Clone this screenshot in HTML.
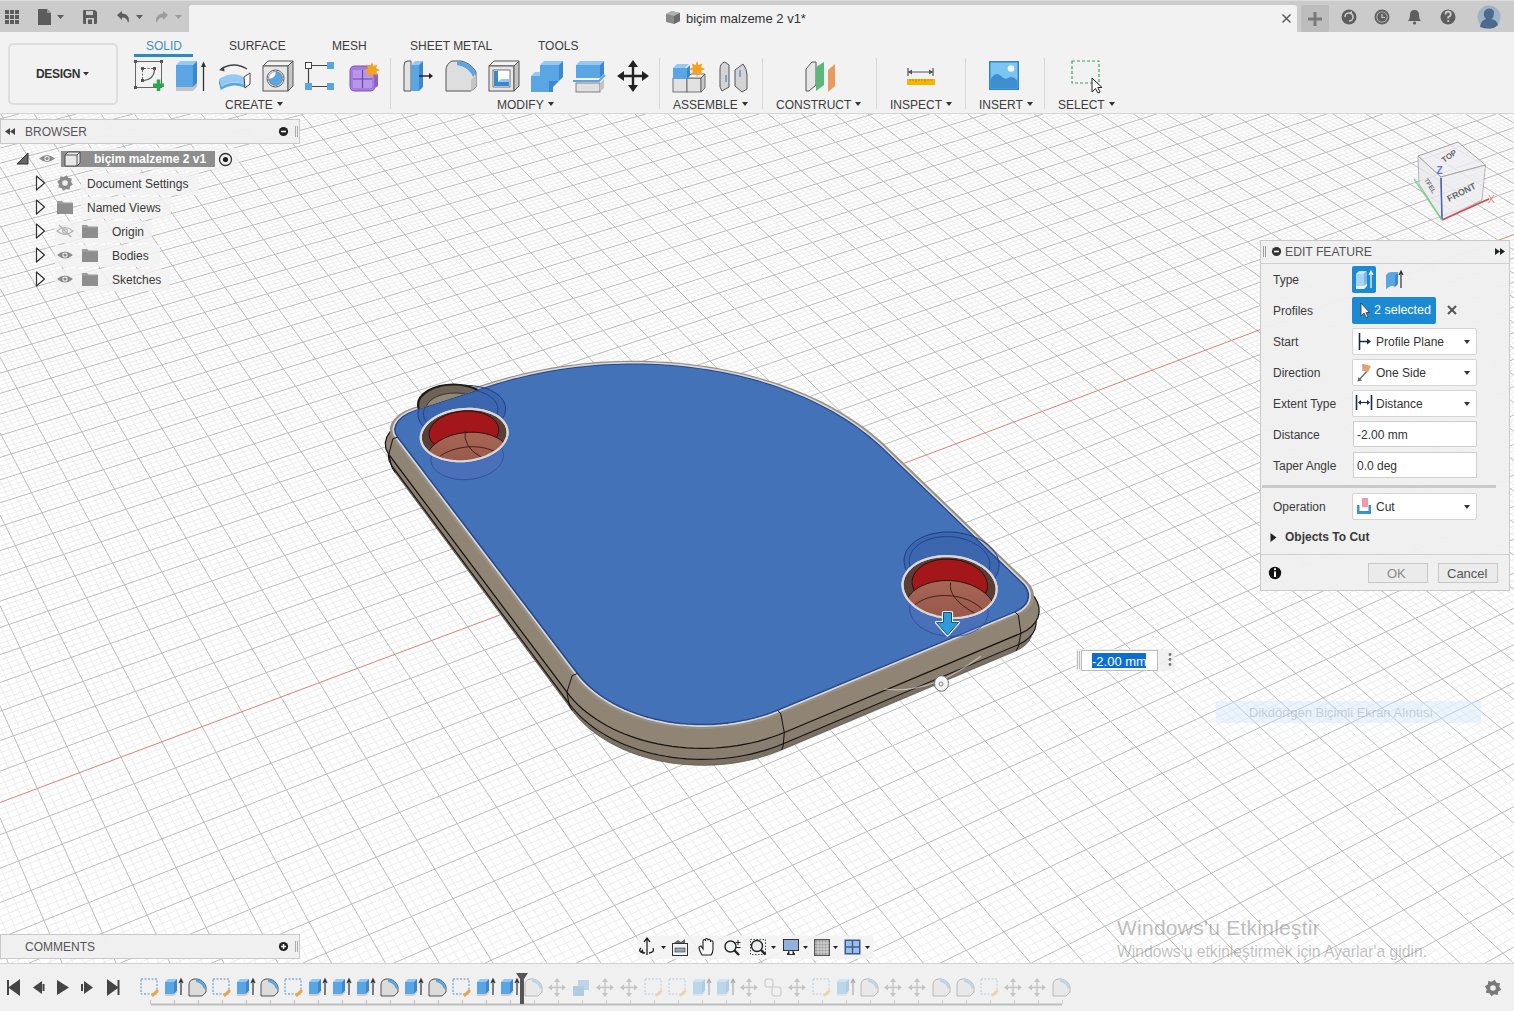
<!DOCTYPE html>
<html><head><meta charset="utf-8">
<style>
*{margin:0;padding:0;box-sizing:border-box}
html,body{width:1514px;height:1011px;overflow:hidden;background:#fff;font-family:"Liberation Sans",sans-serif;color:#3c3c3c}
.a{position:absolute}
.t{position:absolute;white-space:nowrap;line-height:1}
#topbar{left:0;top:0;width:1514px;height:32px;background:#cbcbcb;border-top:1px solid #dcdcdc}
#tab{left:189px;top:5px;width:1108px;height:28px;background:#f2f2f2;border-radius:3px 3px 0 0}
#toolbar{left:0;top:32px;width:1514px;height:82px;background:#f2f2f2;border-bottom:1px solid #d6d6d6}
.tabl{font-size:12px;color:#3c3c3c;top:40px}
.grp{font-size:12px;color:#3c3c3c;top:99px}
.tri{display:inline-block;width:0;height:0;border-left:3px solid transparent;border-right:3px solid transparent;border-top:4px solid #333;vertical-align:middle;margin-left:4px;position:relative;top:-2px}
.sep{position:absolute;top:58px;width:1px;height:51px;background:#d8d8d8}
.panel{background:rgba(240,240,240,0.97);border:1px solid #c9c9c9}
.row{position:absolute;height:22px;background:rgba(242,242,242,0.85)}
.lbl{font-size:12px;color:#3a3a3a}
.dd{position:absolute;left:1352px;width:125px;height:27px;background:#fff;border:1px solid #d4d4d4;border-radius:2px}
.ddt{position:absolute;left:23px;top:7px;font-size:12px;color:#333;white-space:nowrap;line-height:1}
.arr{position:absolute;right:6px;top:11px;width:0;height:0;border-left:3.5px solid transparent;border-right:3.5px solid transparent;border-top:4px solid #333}
.inp{position:absolute;left:1353px;width:124px;height:26px;background:#fff;border:1px solid #cfcfcf}
.inpt{position:absolute;left:3px;top:7px;font-size:12px;color:#333;line-height:1;white-space:nowrap}
#timeline{left:0;top:963px;width:1514px;height:48px;background:#f0f0f0;border-top:1px solid #d2d2d2}
</style></head><body>
<svg id="grid" width="1514" height="1011" viewBox="0 0 1514 1011" style="position:absolute;left:0;top:0"><path d="M19.0 963.0L0.0 916.6M29.7 963.0L0.0 891.0M40.5 963.0L0.0 866.0M51.3 963.0L0.0 841.6M72.9 963.0L0.0 794.4M83.7 963.0L0.0 771.5M94.4 963.0L0.0 749.2M105.2 963.0L0.0 727.4M126.8 963.0L0.0 685.1M137.6 963.0L0.0 664.6M148.3 963.0L0.0 644.5M159.1 963.0L0.0 624.8M180.7 963.0L0.0 586.7M191.5 963.0L0.0 568.2M202.2 963.0L0.0 550.1M213.0 963.0L0.0 532.3M234.6 963.0L0.0 497.7M245.3 963.0L0.0 481.0M256.1 963.0L0.0 464.5M266.9 963.0L0.0 448.3M288.4 963.0L0.0 416.9M299.2 963.0L0.0 401.6M310.0 963.0L0.0 386.6M320.8 963.0L0.0 371.8M342.3 963.0L0.0 343.1M353.1 963.0L0.0 329.1M363.8 963.0L0.0 315.3M374.6 963.0L0.0 301.8M396.1 963.0L0.0 275.4M406.9 963.0L0.0 262.6M417.7 963.0L0.0 249.9M428.4 963.0L0.0 237.5M450.0 963.0L0.0 213.2M460.7 963.0L0.0 201.4M471.5 963.0L0.0 189.7M482.3 963.0L0.0 178.2M503.8 963.0L0.0 155.8M514.6 963.0L0.0 144.8M525.3 963.0L0.0 134.0M536.1 963.0L0.0 123.4M557.6 963.0L7.4 114.0M568.4 963.0L14.1 114.0M579.1 963.0L20.8 114.0M589.9 963.0L27.4 114.0M611.4 963.0L40.8 114.0M622.2 963.0L47.5 114.0M632.9 963.0L54.2 114.0M643.7 963.0L60.9 114.0M665.2 963.0L74.3 114.0M676.0 963.0L80.9 114.0M686.7 963.0L87.6 114.0M697.5 963.0L94.3 114.0M719.0 963.0L107.7 114.0M729.7 963.0L114.4 114.0M740.5 963.0L121.1 114.0M751.2 963.0L127.7 114.0M772.7 963.0L141.1 114.0M783.5 963.0L147.8 114.0M794.2 963.0L154.5 114.0M805.0 963.0L161.2 114.0M826.5 963.0L174.5 114.0M837.2 963.0L181.2 114.0M848.0 963.0L187.9 114.0M858.7 963.0L194.6 114.0M880.2 963.0L207.9 114.0M891.0 963.0L214.6 114.0M901.7 963.0L221.3 114.0M912.5 963.0L228.0 114.0M934.0 963.0L241.3 114.0M944.7 963.0L248.0 114.0M955.4 963.0L254.7 114.0M966.2 963.0L261.4 114.0M987.7 963.0L274.7 114.0M998.4 963.0L281.4 114.0M1009.2 963.0L288.1 114.0M1019.9 963.0L294.8 114.0M1041.4 963.0L308.1 114.0M1052.1 963.0L314.8 114.0M1062.8 963.0L321.5 114.0M1073.6 963.0L328.2 114.0M1095.1 963.0L341.5 114.0M1105.8 963.0L348.2 114.0M1116.5 963.0L354.9 114.0M1127.3 963.0L361.5 114.0M1148.7 963.0L374.9 114.0M1159.5 963.0L381.6 114.0M1170.2 963.0L388.2 114.0M1180.9 963.0L394.9 114.0M1202.4 963.0L408.2 114.0M1213.1 963.0L414.9 114.0M1223.9 963.0L421.6 114.0M1234.6 963.0L428.3 114.0M1256.1 963.0L441.6 114.0M1266.8 963.0L448.3 114.0M1277.5 963.0L454.9 114.0M1288.2 963.0L461.6 114.0M1309.7 963.0L474.9 114.0M1320.4 963.0L481.6 114.0M1331.2 963.0L488.3 114.0M1341.9 963.0L495.0 114.0M1363.3 963.0L508.3 114.0M1374.1 963.0L515.0 114.0M1384.8 963.0L521.6 114.0M1395.5 963.0L528.3 114.0M1417.0 963.0L541.6 114.0M1427.7 963.0L548.3 114.0M1438.4 963.0L555.0 114.0M1449.1 963.0L561.6 114.0M1470.6 963.0L575.0 114.0M1481.3 963.0L581.6 114.0M1492.0 963.0L588.3 114.0M1502.7 963.0L594.9 114.0M1514.0 953.6L608.3 114.0M1514.0 943.7L614.9 114.0M1514.0 934.0L621.6 114.0M1514.0 924.3L628.3 114.0M1514.0 905.2L641.6 114.0M1514.0 895.8L648.2 114.0M1514.0 886.4L654.9 114.0M1514.0 877.2L661.6 114.0M1514.0 858.9L674.9 114.0M1514.0 849.8L681.6 114.0M1514.0 840.9L688.2 114.0M1514.0 832.0L694.9 114.0M1514.0 814.5L708.2 114.0M1514.0 805.8L714.8 114.0M1514.0 797.2L721.5 114.0M1514.0 788.7L728.2 114.0M1514.0 771.9L741.5 114.0M1514.0 763.6L748.1 114.0M1514.0 755.3L754.8 114.0M1514.0 747.2L761.4 114.0M1514.0 731.0L774.8 114.0M1514.0 723.0L781.4 114.0M1514.0 715.1L788.1 114.0M1514.0 707.3L794.7 114.0M1514.0 691.7L808.0 114.0M1514.0 684.1L814.7 114.0M1514.0 676.5L821.3 114.0M1514.0 668.9L828.0 114.0M1514.0 654.0L841.3 114.0M1514.0 646.6L848.0 114.0M1514.0 639.3L854.6 114.0M1514.0 632.0L861.3 114.0M1514.0 617.6L874.6 114.0M1514.0 610.5L881.2 114.0M1514.0 603.5L887.9 114.0M1514.0 596.5L894.5 114.0M1514.0 582.7L907.8 114.0M1514.0 575.8L914.5 114.0M1514.0 569.0L921.1 114.0M1514.0 562.3L927.8 114.0M1514.0 548.9L941.1 114.0M1514.0 542.3L947.7 114.0M1514.0 535.8L954.4 114.0M1514.0 529.3L961.0 114.0M1514.0 516.4L974.3 114.0M1514.0 510.1L980.9 114.0M1514.0 503.7L987.6 114.0M1514.0 497.5L994.2 114.0M1514.0 485.1L1007.5 114.0M1514.0 478.9L1014.2 114.0M1514.0 472.8L1020.8 114.0M1514.0 466.8L1027.5 114.0M1514.0 454.8L1040.8 114.0M1514.0 448.8L1047.4 114.0M1514.0 443.0L1054.0 114.0M1514.0 437.1L1060.7 114.0M1514.0 425.5L1074.0 114.0M1514.0 419.8L1080.6 114.0M1514.0 414.1L1087.3 114.0M1514.0 408.4L1093.9 114.0M1514.0 397.2L1107.2 114.0M1514.0 391.7L1113.8 114.0M1514.0 386.2L1120.5 114.0M1514.0 380.7L1127.1 114.0M1514.0 369.9L1140.4 114.0M1514.0 364.5L1147.0 114.0M1514.0 359.2L1153.7 114.0M1514.0 353.9L1160.3 114.0M1514.0 343.4L1173.6 114.0M1514.0 338.2L1180.2 114.0M1514.0 333.1L1186.8 114.0M1514.0 327.9L1193.5 114.0M1514.0 317.8L1206.8 114.0M1514.0 312.8L1213.4 114.0M1514.0 307.8L1220.0 114.0M1514.0 302.8L1226.7 114.0M1514.0 293.0L1239.9 114.0M1514.0 288.1L1246.6 114.0M1514.0 283.2L1253.2 114.0M1514.0 278.4L1259.8 114.0M1514.0 268.9L1273.1 114.0M1514.0 264.2L1279.7 114.0M1514.0 259.5L1286.4 114.0M1514.0 254.8L1293.0 114.0M1514.0 245.6L1306.3 114.0M1514.0 241.0L1312.9 114.0M1514.0 236.4L1319.5 114.0M1514.0 231.9L1326.2 114.0M1514.0 222.9L1339.4 114.0M1514.0 218.5L1346.1 114.0M1514.0 214.1L1352.7 114.0M1514.0 209.7L1359.3 114.0M1514.0 200.9L1372.6 114.0M1514.0 196.6L1379.2 114.0M1514.0 192.3L1385.8 114.0M1514.0 188.1L1392.5 114.0M1514.0 179.6L1405.7 114.0M1514.0 175.4L1412.3 114.0M1514.0 171.3L1419.0 114.0M1514.0 167.1L1425.6 114.0M1514.0 158.9L1438.8 114.0M1514.0 154.8L1445.5 114.0M1514.0 150.8L1452.1 114.0M1514.0 146.7L1458.7 114.0M1514.0 138.8L1472.0 114.0M1514.0 134.8L1478.6 114.0M1514.0 130.9L1485.2 114.0M1514.0 126.9L1491.8 114.0M1514.0 119.2L1505.1 114.0M1514.0 115.3L1511.7 114.0M1503.5 963.0L1514.0 957.1M1467.2 963.0L1514.0 937.1M1449.0 963.0L1514.0 927.2M1430.9 963.0L1514.0 917.5M1412.7 963.0L1514.0 907.8M1376.4 963.0L1514.0 888.6M1358.2 963.0L1514.0 879.2M1340.1 963.0L1514.0 869.8M1321.9 963.0L1514.0 860.6M1285.6 963.0L1514.0 842.3M1267.4 963.0L1514.0 833.2M1249.3 963.0L1514.0 824.3M1231.1 963.0L1514.0 815.4M1194.8 963.0L1514.0 797.8M1176.6 963.0L1514.0 789.2M1158.4 963.0L1514.0 780.6M1140.3 963.0L1514.0 772.0M1103.9 963.0L1514.0 755.2M1085.7 963.0L1514.0 746.9M1067.6 963.0L1514.0 738.7M1049.4 963.0L1514.0 730.5M1013.0 963.0L1514.0 714.3M994.8 963.0L1514.0 706.3M976.6 963.0L1514.0 698.4M958.5 963.0L1514.0 690.6M922.1 963.0L1514.0 675.1M903.9 963.0L1514.0 667.4M885.7 963.0L1514.0 659.8M867.5 963.0L1514.0 652.2M831.1 963.0L1514.0 637.3M812.9 963.0L1514.0 629.9M794.7 963.0L1514.0 622.6M776.5 963.0L1514.0 615.4M740.1 963.0L1514.0 601.0M721.9 963.0L1514.0 593.9M703.7 963.0L1514.0 586.9M685.5 963.0L1514.0 579.9M649.1 963.0L1514.0 566.1M630.9 963.0L1514.0 559.2M612.6 963.0L1514.0 552.4M594.4 963.0L1514.0 545.7M558.0 963.0L1514.0 532.4M539.8 963.0L1514.0 525.8M521.6 963.0L1514.0 519.3M503.3 963.0L1514.0 512.8M466.9 963.0L1514.0 499.9M448.7 963.0L1514.0 493.6M430.4 963.0L1514.0 487.3M412.2 963.0L1514.0 481.0M375.7 963.0L1514.0 468.6M357.5 963.0L1514.0 462.5M339.3 963.0L1514.0 456.4M321.0 963.0L1514.0 450.4M284.6 963.0L1514.0 438.4M266.3 963.0L1514.0 432.5M248.1 963.0L1514.0 426.6M229.8 963.0L1514.0 420.8M193.4 963.0L1514.0 409.2M175.1 963.0L1514.0 403.5M156.9 963.0L1514.0 397.8M138.6 963.0L1514.0 392.2M102.1 963.0L1514.0 381.0M83.9 963.0L1514.0 375.5M65.6 963.0L1514.0 370.0M47.3 963.0L1514.0 364.5M10.8 963.0L1514.0 353.7M0.0 960.0L1514.0 348.4M0.0 952.7L1514.0 343.1M0.0 945.4L1514.0 337.8M0.0 930.9L1514.0 327.4M0.0 923.8L1514.0 322.2M0.0 916.7L1514.0 317.0M0.0 909.6L1514.0 311.9M0.0 895.6L1514.0 301.8M0.0 888.7L1514.0 296.8M0.0 881.8L1514.0 291.8M0.0 875.0L1514.0 286.9M0.0 861.4L1514.0 277.1M0.0 854.7L1514.0 272.2M0.0 848.0L1514.0 267.4M0.0 841.4L1514.0 262.6M0.0 828.3L1514.0 253.1M0.0 821.8L1514.0 248.4M0.0 815.3L1514.0 243.7M0.0 808.9L1514.0 239.1M0.0 796.1L1514.0 229.9M0.0 789.8L1514.0 225.3M0.0 783.6L1514.0 220.8M0.0 777.3L1514.0 216.2M0.0 765.0L1514.0 207.3M0.0 758.9L1514.0 202.9M0.0 752.8L1514.0 198.5M0.0 746.7L1514.0 194.1M0.0 734.7L1514.0 185.4M0.0 728.8L1514.0 181.1M0.0 722.9L1514.0 176.9M0.0 717.0L1514.0 172.6M0.0 705.4L1514.0 164.2M0.0 699.6L1514.0 160.0M0.0 693.9L1514.0 155.9M0.0 688.2L1514.0 151.8M0.0 676.9L1514.0 143.6M0.0 671.3L1514.0 139.5M0.0 665.7L1514.0 135.5M0.0 660.2L1514.0 131.5M0.0 649.2L1514.0 123.5M0.0 643.7L1514.0 119.6M0.0 638.3L1514.0 115.7M0.0 632.9L1507.5 114.0M0.0 622.3L1484.9 114.0M-0.0 617.0L1473.6 114.0M0.0 611.7L1462.3 114.0M-0.0 606.5L1451.0 114.0M0.0 596.1L1428.4 114.0M0.0 590.9L1417.1 114.0M0.0 585.8L1405.8 114.0M0.0 580.7L1394.5 114.0M-0.0 570.6L1371.8 114.0M0.0 565.6L1360.5 114.0M0.0 560.6L1349.2 114.0M0.0 555.6L1337.9 114.0M0.0 545.8L1315.2 114.0M0.0 540.9L1303.9 114.0M0.0 536.1L1292.6 114.0M0.0 531.2L1281.3 114.0M0.0 521.7L1258.6 114.0M0.0 516.9L1247.3 114.0M0.0 512.2L1236.0 114.0M0.0 507.5L1224.7 114.0M0.0 498.2L1202.0 114.0M0.0 493.5L1190.7 114.0M0.0 488.9L1179.3 114.0M0.0 484.4L1168.0 114.0M0.0 475.3L1145.3 114.0M0.0 470.8L1134.0 114.0M0.0 466.3L1122.7 114.0M0.0 461.8L1111.3 114.0M0.0 453.0L1088.7 114.0M0.0 448.6L1077.3 114.0M0.0 444.2L1066.0 114.0M0.0 439.8L1054.7 114.0M0.0 431.2L1032.0 114.0M0.0 426.9L1020.6 114.0M0.0 422.7L1009.3 114.0M0.0 418.4L998.0 114.0M0.0 410.0L975.3 114.0M0.0 405.8L963.9 114.0M0.0 401.7L952.6 114.0M0.0 397.5L941.2 114.0M0.0 389.3L918.5 114.0M0.0 385.2L907.2 114.0M0.0 381.2L895.8 114.0M0.0 377.1L884.5 114.0M0.0 369.1L861.8 114.0M0.0 365.1L850.4 114.0M0.0 361.2L839.1 114.0M0.0 357.2L827.7 114.0M0.0 349.4L805.0 114.0M0.0 345.5L793.6 114.0M0.0 341.7L782.3 114.0M0.0 337.8L770.9 114.0M0.0 330.2L748.2 114.0M0.0 326.4L736.8 114.0M0.0 322.6L725.5 114.0M0.0 318.8L714.1 114.0M0.0 311.4L691.4 114.0M0.0 307.7L680.0 114.0M0.0 304.0L668.6 114.0M0.0 300.3L657.3 114.0M0.0 293.0L634.5 114.0M0.0 289.4L623.1 114.0M0.0 285.8L611.8 114.0M0.0 282.2L600.4 114.0M0.0 275.1L577.6 114.0M0.0 271.5L566.3 114.0M0.0 268.0L554.9 114.0M0.0 264.5L543.5 114.0M0.0 257.5L520.8 114.0M0.0 254.1L509.4 114.0M0.0 250.6L498.0 114.0M0.0 247.2L486.6 114.0M0.0 240.4L463.8 114.0M0.0 237.0L452.5 114.0M0.0 233.7L441.1 114.0M-0.0 230.3L429.7 114.0M0.0 223.6L406.9 114.0M0.0 220.3L395.5 114.0M0.0 217.0L384.1 114.0M0.0 213.8L372.7 114.0M0.0 207.2L349.9 114.0M-0.0 204.0L338.6 114.0M0.0 200.8L327.2 114.0M0.0 197.6L315.8 114.0M-0.0 191.2L293.0 114.0M0.0 188.0L281.6 114.0M-0.0 184.9L270.2 114.0M0.0 181.7L258.8 114.0M0.0 175.5L236.0 114.0M0.0 172.4L224.6 114.0M0.0 169.3L213.2 114.0M0.0 166.3L201.8 114.0M0.0 160.1L179.0 114.0M0.0 157.1L167.5 114.0M0.0 154.1L156.1 114.0M0.0 151.1L144.7 114.0M0.0 145.1L121.9 114.0M-0.0 142.1L110.5 114.0M-0.0 139.2L99.1 114.0M0.0 136.2L87.7 114.0M-0.0 130.4L64.8 114.0M0.0 127.5L53.4 114.0M0.0 124.6L42.0 114.0M0.0 121.7L30.6 114.0M-0.0 115.9L7.8 114.0" stroke="#ededed" stroke-width="1" fill="none"/><path d="M8.2 963.0L0.0 942.7M62.1 963.0L0.0 817.7M116.0 963.0L0.0 706.0M169.9 963.0L0.0 605.6M223.8 963.0L0.0 514.9M277.7 963.0L0.0 432.5M331.5 963.0L0.0 357.3M385.4 963.0L0.0 288.5M439.2 963.0L0.0 225.3M493.0 963.0L0.0 166.9M546.9 963.0L0.7 114.0M600.7 963.0L34.1 114.0M654.4 963.0L67.6 114.0M708.2 963.0L101.0 114.0M762.0 963.0L134.4 114.0M815.7 963.0L167.8 114.0M869.5 963.0L201.3 114.0M923.2 963.0L234.7 114.0M976.9 963.0L268.1 114.0M1030.6 963.0L301.4 114.0M1084.3 963.0L334.8 114.0M1138.0 963.0L368.2 114.0M1191.7 963.0L401.6 114.0M1245.3 963.0L434.9 114.0M1299.0 963.0L468.3 114.0M1352.6 963.0L501.6 114.0M1406.2 963.0L535.0 114.0M1459.8 963.0L568.3 114.0M1513.4 963.0L601.6 114.0M1514.0 914.7L634.9 114.0M1514.0 868.0L668.2 114.0M1514.0 823.2L701.5 114.0M1514.0 780.3L734.8 114.0M1514.0 739.1L768.1 114.0M1514.0 699.5L801.4 114.0M1514.0 661.4L834.6 114.0M1514.0 624.8L867.9 114.0M1514.0 589.5L901.2 114.0M1514.0 555.6L934.4 114.0M1514.0 522.8L967.7 114.0M1514.0 491.2L1000.9 114.0M1514.0 460.7L1034.1 114.0M1514.0 431.3L1067.3 114.0M1514.0 402.8L1100.5 114.0M1514.0 375.3L1133.7 114.0M1514.0 348.6L1166.9 114.0M1514.0 322.8L1200.1 114.0M1514.0 297.9L1233.3 114.0M1514.0 273.6L1266.5 114.0M1514.0 250.2L1299.6 114.0M1514.0 227.4L1332.8 114.0M1514.0 205.3L1365.9 114.0M1514.0 183.8L1399.1 114.0M1514.0 163.0L1432.2 114.0M1514.0 142.7L1465.3 114.0M1514.0 123.0L1498.5 114.0M1485.3 963.0L1514.0 947.1M1394.6 963.0L1514.0 898.2M1303.8 963.0L1514.0 851.4M1212.9 963.0L1514.0 806.6M1122.1 963.0L1514.0 763.6M1031.2 963.0L1514.0 722.4M940.3 963.0L1514.0 682.8M849.3 963.0L1514.0 644.7M758.3 963.0L1514.0 608.2M667.3 963.0L1514.0 572.9M576.2 963.0L1514.0 539.0M485.1 963.0L1514.0 506.3M394.0 963.0L1514.0 474.8M302.8 963.0L1514.0 444.4M211.6 963.0L1514.0 415.0M120.4 963.0L1514.0 386.6M29.1 963.0L1514.0 359.1M0.0 938.1L1514.0 332.6M0.0 902.6L1514.0 306.9M0.0 868.2L1514.0 282.0M0.0 834.8L1514.0 257.8M0.0 771.1L1514.0 211.8M0.0 740.7L1514.0 189.8M-0.0 711.2L1514.0 168.4M0.0 682.5L1514.0 147.6M-0.0 654.7L1514.0 127.5M0.0 627.6L1496.2 114.0M0.0 601.2L1439.7 114.0M0.0 575.6L1383.1 114.0M0.0 550.7L1326.6 114.0M0.0 526.4L1270.0 114.0M0.0 502.8L1213.3 114.0M0.0 479.8L1156.7 114.0M0.0 457.4L1100.0 114.0M0.0 435.5L1043.3 114.0M0.0 414.2L986.6 114.0M0.0 393.4L929.9 114.0M0.0 373.1L873.1 114.0M0.0 353.3L816.3 114.0M0.0 334.0L759.5 114.0M0.0 315.1L702.7 114.0M0.0 296.7L645.9 114.0M0.0 278.6L589.0 114.0M0.0 261.0L532.1 114.0M0.0 243.8L475.2 114.0M0.0 227.0L418.3 114.0M0.0 210.5L361.3 114.0M0.0 194.4L304.4 114.0M0.0 178.6L247.4 114.0M0.0 163.2L190.4 114.0M0.0 148.1L133.3 114.0M0.0 133.3L76.3 114.0M0.0 118.8L19.2 114.0" stroke="#bcbcbc" stroke-width="1" fill="none"/><path d="M0.0 802.5L1514.0 234.4" stroke="#e47c7c" stroke-width="1" fill="none"/></svg>
<svg id="model" width="1514" height="1011" viewBox="0 0 1514 1011" style="position:absolute;left:0;top:0"><defs><linearGradient id="wallg" x1="0" y1="0" x2="0" y2="1"><stop offset="0" stop-color="#a86656"/><stop offset="1" stop-color="#8c5043"/></linearGradient><clipPath id="h1c"><path d="M503.4 421.5 L501.7 419.6 L499.7 417.9 L497.4 416.2 L494.8 414.7 L492.0 413.4 L489.1 412.2 L485.9 411.2 L482.6 410.3 L479.2 409.7 L475.6 409.2 L472.0 408.9 L468.3 408.9 L464.5 409.0 L460.8 409.3 L457.1 409.8 L453.4 410.4 L449.9 411.3 L446.4 412.3 L443.1 413.5 L439.9 414.9 L436.9 416.4 L434.0 418.1 L431.5 419.8 L429.1 421.7 L427.0 423.7 L425.2 425.8 L423.7 428.0 L422.5 430.2 L421.6 432.5 L421.0 434.7 L420.8 437.0 L420.8 439.3 L421.3 441.5 L422.0 443.7 L423.1 445.9 L424.5 447.9 L426.2 449.8 L428.2 451.7 L430.4 453.4 L433.0 455.0 L435.8 456.4 L438.8 457.6 L442.0 458.7 L445.4 459.6 L448.9 460.3 L452.6 460.8 L456.3 461.1 L460.1 461.2 L464.0 461.1 L467.8 460.7 L471.6 460.2 L475.4 459.5 L479.1 458.6 L482.6 457.5 L486.0 456.2 L489.2 454.8 L492.3 453.2 L495.1 451.5 L497.6 449.6 L499.9 447.7 L502.0 445.6 L503.7 443.5 L505.1 441.3 L506.2 439.0 L507.0 436.8 L507.5 434.5 L507.6 432.2 L507.4 430.0 L506.9 427.8 L506.1 425.6 L504.9 423.5Z"/></clipPath><clipPath id="h2c"><path d="M988.0 571.1 L985.6 568.8 L982.8 566.7 L979.8 564.8 L976.6 563.0 L973.2 561.4 L969.6 560.0 L965.8 558.8 L962.0 557.8 L958.0 557.1 L954.0 556.5 L950.0 556.2 L946.0 556.1 L941.9 556.2 L938.0 556.6 L934.1 557.2 L930.4 558.0 L926.7 559.0 L923.3 560.2 L920.0 561.6 L917.0 563.2 L914.2 565.0 L911.7 567.0 L909.4 569.1 L907.4 571.3 L905.8 573.7 L904.4 576.2 L903.5 578.7 L902.8 581.4 L902.5 584.0 L902.6 586.7 L903.0 589.4 L903.8 592.1 L905.0 594.8 L906.4 597.4 L908.3 599.9 L910.4 602.3 L912.8 604.6 L915.6 606.8 L918.6 608.8 L921.8 610.7 L925.3 612.4 L929.0 613.9 L932.8 615.1 L936.7 616.2 L940.8 617.0 L944.9 617.6 L949.1 617.9 L953.3 618.0 L957.4 617.9 L961.5 617.5 L965.5 616.9 L969.3 616.1 L973.1 615.0 L976.6 613.7 L979.9 612.2 L982.9 610.5 L985.7 608.6 L988.3 606.5 L990.5 604.3 L992.4 602.0 L993.9 599.6 L995.2 597.0 L996.0 594.4 L996.5 591.8 L996.7 589.1 L996.5 586.4 L995.9 583.7 L995.0 581.0 L993.7 578.4 L992.2 575.9 L990.3 573.4Z"/></clipPath></defs><path d="M395.1 472.6 L392.5 467.6 L391.9 462.2 L393.3 456.8 L396.6 451.6 L401.6 446.8 L408.1 442.7 L415.8 439.5 L488.9 415.3 L495.9 413.0 L503.0 410.9 L510.1 408.8 L517.3 406.9 L524.5 405.1 L531.8 403.4 L539.1 401.9 L546.5 400.4 L553.9 399.1 L561.3 397.9 L568.8 396.8 L576.2 395.8 L583.7 394.9 L591.3 394.2 L598.8 393.5 L606.4 393.0 L613.9 392.6 L621.5 392.3 L629.0 392.2 L636.6 392.1 L644.1 392.2 L651.6 392.4 L659.2 392.7 L666.7 393.2 L674.1 393.7 L681.6 394.4 L689.0 395.2 L696.4 396.1 L703.7 397.1 L711.0 398.2 L718.2 399.5 L725.5 400.9 L732.6 402.4 L739.7 404.0 L746.7 405.7 L753.7 407.5 L760.6 409.5 L767.4 411.5 L774.2 413.7 L780.8 416.0 L787.4 418.4 L793.9 420.9 L800.3 423.5 L806.6 426.2 L812.8 429.1 L818.9 432.0 L824.9 435.1 L830.8 438.2 L836.6 441.5 L842.3 444.8 L847.8 448.3 L853.2 451.8 L858.5 455.5 L863.7 459.3 L868.7 463.1 L873.5 467.1 L878.3 471.1 L882.8 475.2 L887.3 479.4 L1024.9 614.2 L1028.5 618.4 L1031.0 622.8 L1032.3 627.4 L1032.4 632.0 L1031.3 636.5 L1029.1 640.8 L1025.7 644.7 L1021.3 648.0 L1016.1 650.8 L781.6 749.9 L775.5 752.3 L769.3 754.6 L762.9 756.6 L756.4 758.5 L749.8 760.1 L743.1 761.5 L736.2 762.7 L729.3 763.7 L722.4 764.4 L715.4 764.9 L708.4 765.2 L701.4 765.3 L694.3 765.1 L687.4 764.7 L680.4 764.1 L673.5 763.3 L666.7 762.2 L660.0 761.0 L653.3 759.5 L646.8 757.7 L640.4 755.8 L634.2 753.7 L628.2 751.4 L622.3 748.9 L616.6 746.2 L611.1 743.3 L605.8 740.3 L600.8 737.1 L595.9 733.7 L591.4 730.2 L587.0 726.6 L583.0 722.8 L579.2 718.9 L575.7 714.9 L572.4 710.8Z" fill="#7a7063" stroke="#5e564c" stroke-width="0.8"/><path d="M391.7 465.7 L389.0 460.4 L388.3 454.6 L389.8 448.9 L393.3 443.3 L398.7 438.3 L405.7 433.9 L413.8 430.6 L487.2 406.4 L494.2 404.1 L501.4 402.0 L508.6 399.9 L515.8 398.0 L523.1 396.2 L530.5 394.5 L537.9 392.9 L545.3 391.5 L552.8 390.1 L560.3 388.9 L567.8 387.8 L575.4 386.8 L583.0 385.9 L590.6 385.2 L598.2 384.5 L605.8 384.0 L613.5 383.6 L621.1 383.3 L628.7 383.2 L636.4 383.1 L644.0 383.2 L651.6 383.4 L659.2 383.7 L666.8 384.2 L674.3 384.7 L681.8 385.4 L689.3 386.2 L696.8 387.1 L704.2 388.1 L711.6 389.3 L718.9 390.5 L726.2 391.9 L733.4 393.4 L740.6 395.0 L747.7 396.7 L754.7 398.6 L761.7 400.6 L768.6 402.6 L775.4 404.8 L782.2 407.1 L788.8 409.5 L795.4 412.0 L801.9 414.7 L808.2 417.4 L814.5 420.3 L820.7 423.2 L826.8 426.3 L832.7 429.5 L838.6 432.7 L844.3 436.1 L849.9 439.6 L855.4 443.2 L860.7 446.8 L865.9 450.6 L871.0 454.5 L875.9 458.5 L880.7 462.5 L885.3 466.7 L889.8 470.9 L1028.1 605.4 L1031.9 609.8 L1034.5 614.6 L1036.0 619.5 L1036.1 624.4 L1035.0 629.3 L1032.6 633.8 L1028.9 637.9 L1024.2 641.5 L1018.6 644.5 L783.2 743.7 L777.0 746.2 L770.7 748.5 L764.1 750.6 L757.5 752.4 L750.7 754.1 L743.8 755.5 L736.8 756.8 L729.8 757.7 L722.7 758.5 L715.5 759.0 L708.3 759.3 L701.1 759.4 L694.0 759.3 L686.8 758.9 L679.7 758.2 L672.6 757.4 L665.7 756.3 L658.8 755.0 L652.0 753.5 L645.3 751.7 L638.8 749.8 L632.4 747.6 L626.2 745.2 L620.2 742.7 L614.4 739.9 L608.8 737.0 L603.4 733.9 L598.2 730.6 L593.3 727.2 L588.6 723.6 L584.2 719.9 L580.0 716.1 L576.2 712.1 L572.6 708.0 L569.3 703.9Z" fill="#887d6f" stroke="#15110e" stroke-width="1.1"/><path d="M388.8 454.4 L385.9 448.8 L385.3 442.9 L386.8 437.0 L390.5 431.2 L396.1 426.0 L403.3 421.6 L411.8 418.1 L485.4 394.0 L492.6 391.7 L499.8 389.6 L507.0 387.5 L514.4 385.6 L521.7 383.8 L529.2 382.1 L536.6 380.5 L544.1 379.1 L551.7 377.7 L559.2 376.5 L566.8 375.4 L574.5 374.4 L582.1 373.5 L589.8 372.8 L597.5 372.1 L605.2 371.6 L612.9 371.2 L620.6 370.9 L628.3 370.8 L636.0 370.7 L643.7 370.8 L651.3 371.0 L659.0 371.3 L666.6 371.8 L674.2 372.3 L681.8 373.0 L689.4 373.8 L696.9 374.7 L704.4 375.7 L711.8 376.9 L719.2 378.1 L726.6 379.5 L733.8 381.0 L741.1 382.6 L748.2 384.4 L755.3 386.2 L762.4 388.2 L769.3 390.3 L776.2 392.4 L783.0 394.7 L789.7 397.2 L796.4 399.7 L802.9 402.3 L809.3 405.1 L815.7 407.9 L821.9 410.9 L828.0 414.0 L834.0 417.1 L839.9 420.4 L845.7 423.8 L851.4 427.3 L856.9 430.9 L862.3 434.5 L867.6 438.3 L872.7 442.2 L877.7 446.2 L882.5 450.2 L887.2 454.4 L891.7 458.7 L1030.7 592.8 L1034.7 597.4 L1037.4 602.3 L1038.9 607.4 L1039.1 612.5 L1037.9 617.5 L1035.4 622.2 L1031.7 626.5 L1026.8 630.2 L1020.9 633.3 L784.3 732.5 L778.0 735.0 L771.5 737.3 L764.9 739.4 L758.1 741.3 L751.2 743.0 L744.2 744.4 L737.2 745.7 L730.0 746.7 L722.8 747.4 L715.5 748.0 L708.2 748.3 L700.9 748.4 L693.6 748.2 L686.3 747.8 L679.1 747.2 L671.9 746.3 L664.8 745.2 L657.8 743.9 L650.9 742.3 L644.1 740.6 L637.5 738.6 L631.0 736.4 L624.7 734.0 L618.6 731.5 L612.7 728.7 L607.0 725.7 L601.5 722.6 L596.3 719.3 L591.3 715.8 L586.5 712.2 L582.0 708.5 L577.8 704.6 L573.9 700.6 L570.2 696.4 L566.9 692.2Z" fill="#908474" stroke="#15110e" stroke-width="1.2"/><path d="M392.8 438.8 L390.3 434.1 L389.7 429.0 L391.0 423.9 L394.2 419.0 L399.0 414.5 L405.3 410.7 L412.6 407.7 L486.7 383.6 L493.8 381.3 L500.9 379.2 L508.0 377.2 L515.2 375.4 L522.5 373.6 L529.8 371.9 L537.2 370.4 L544.6 368.9 L552.0 367.6 L559.5 366.4 L567.0 365.3 L574.5 364.4 L582.1 363.5 L589.6 362.8 L597.2 362.1 L604.8 361.6 L612.4 361.2 L620.0 361.0 L627.6 360.8 L635.2 360.8 L642.8 360.8 L650.3 361.0 L657.9 361.4 L665.4 361.8 L672.9 362.3 L680.4 363.0 L687.9 363.8 L695.3 364.7 L702.7 365.7 L710.0 366.8 L717.3 368.0 L724.5 369.4 L731.7 370.9 L738.8 372.4 L745.9 374.1 L752.9 376.0 L759.8 377.9 L766.7 379.9 L773.5 382.1 L780.2 384.3 L786.8 386.7 L793.3 389.2 L799.8 391.7 L806.1 394.4 L812.4 397.2 L818.5 400.1 L824.5 403.1 L830.5 406.2 L836.3 409.5 L842.0 412.8 L847.5 416.2 L853.0 419.7 L858.3 423.3 L863.5 427.0 L868.5 430.8 L873.4 434.7 L878.2 438.7 L882.8 442.8 L887.2 446.9 L1026.8 581.1 L1030.2 585.0 L1032.5 589.1 L1033.8 593.4 L1033.9 597.7 L1032.9 602.0 L1030.8 605.9 L1027.6 609.5 L1023.4 612.7 L1018.4 615.2 L780.8 713.9 L774.7 716.3 L768.5 718.5 L762.2 720.5 L755.7 722.3 L749.1 723.8 L742.4 725.2 L735.6 726.4 L728.7 727.3 L721.8 728.1 L714.8 728.6 L707.8 728.9 L700.8 728.9 L693.8 728.8 L686.8 728.4 L679.9 727.8 L673.0 727.0 L666.2 726.0 L659.5 724.7 L652.9 723.2 L646.4 721.6 L640.0 719.7 L633.8 717.6 L627.8 715.3 L621.9 712.9 L616.2 710.2 L610.8 707.4 L605.5 704.5 L600.5 701.3 L595.6 698.0 L591.1 694.6 L586.8 691.0 L582.7 687.3 L578.9 683.5 L575.4 679.6 L572.2 675.6Z" fill="#9b8f80"/><path d="M397.5 437.2 L395.4 433.1 L394.8 428.8 L396.0 424.3 L398.7 420.1 L402.9 416.2 L408.3 412.9 L414.6 410.3 L488.8 386.1 L495.8 383.9 L502.8 381.8 L509.8 379.9 L516.9 378.0 L524.1 376.2 L531.3 374.6 L538.5 373.1 L545.8 371.7 L553.1 370.4 L560.5 369.2 L567.9 368.1 L575.3 367.1 L582.7 366.3 L590.1 365.6 L597.6 365.0 L605.1 364.5 L612.5 364.1 L620.0 363.8 L627.5 363.6 L635.0 363.6 L642.4 363.7 L649.9 363.9 L657.3 364.2 L664.8 364.6 L672.1 365.1 L679.5 365.8 L686.8 366.6 L694.1 367.4 L701.4 368.4 L708.6 369.6 L715.8 370.8 L722.9 372.1 L730.0 373.6 L737.0 375.1 L744.0 376.8 L750.9 378.6 L757.7 380.5 L764.4 382.5 L771.1 384.6 L777.7 386.8 L784.2 389.2 L790.6 391.6 L797.0 394.1 L803.2 396.8 L809.4 399.6 L815.4 402.4 L821.3 405.4 L827.2 408.4 L832.9 411.6 L838.5 414.9 L843.9 418.2 L849.3 421.7 L854.5 425.3 L859.6 428.9 L864.5 432.6 L869.3 436.5 L874.0 440.4 L878.5 444.4 L882.9 448.5 L1022.3 582.9 L1025.1 586.2 L1027.1 589.8 L1028.2 593.4 L1028.3 597.1 L1027.4 600.7 L1025.6 604.1 L1022.9 607.1 L1019.3 609.8 L1015.1 612.0 L777.7 710.3 L771.9 712.6 L766.0 714.7 L759.9 716.6 L753.6 718.3 L747.3 719.8 L740.8 721.1 L734.3 722.3 L727.7 723.2 L721.1 723.9 L714.4 724.4 L707.7 724.6 L700.9 724.7 L694.2 724.5 L687.5 724.2 L680.9 723.6 L674.3 722.8 L667.8 721.8 L661.3 720.6 L655.0 719.2 L648.7 717.6 L642.6 715.8 L636.7 713.8 L630.9 711.7 L625.2 709.3 L619.8 706.8 L614.5 704.1 L609.5 701.2 L604.6 698.2 L600.0 695.1 L595.6 691.8 L591.5 688.4 L587.6 684.8 L583.9 681.2 L580.5 677.4 L577.4 673.5Z" fill="#4472b8" stroke="#2a4886" stroke-width="1.7"/><path d="M396.0 437.7 L393.7 433.4 L393.2 428.8 L394.4 424.2 L397.3 419.7 L401.7 415.6 L407.3 412.2 L414.0 409.4 L488.2 385.3 L495.1 383.1 L502.1 381.0 L509.2 379.0 L516.4 377.1 L523.6 375.4 L530.8 373.7 L538.1 372.2 L545.4 370.8 L552.8 369.5 L560.2 368.3 L567.6 367.2 L575.0 366.2 L582.5 365.4 L590.0 364.7 L597.5 364.0 L605.0 363.5 L612.5 363.2 L620.0 362.9 L627.5 362.7 L635.0 362.7 L642.6 362.8 L650.0 363.0 L657.5 363.3 L665.0 363.7 L672.4 364.2 L679.8 364.9 L687.2 365.7 L694.5 366.6 L701.8 367.6 L709.1 368.7 L716.3 369.9 L723.4 371.2 L730.6 372.7 L737.6 374.3 L744.6 375.9 L751.5 377.7 L758.4 379.6 L765.2 381.7 L771.9 383.8 L778.5 386.0 L785.1 388.4 L791.5 390.8 L797.9 393.4 L804.2 396.0 L810.3 398.8 L816.4 401.7 L822.4 404.7 L828.2 407.7 L834.0 410.9 L839.6 414.2 L845.1 417.6 L850.5 421.1 L855.7 424.6 L860.8 428.3 L865.8 432.1 L870.6 435.9 L875.3 439.8 L879.9 443.9 L884.3 448.0 L1023.7 582.3 L1026.8 585.8 L1028.9 589.6 L1030.0 593.4 L1030.1 597.3 L1029.2 601.1 L1027.3 604.7 L1024.4 607.9 L1020.6 610.7 L1016.1 613.0 L778.7 711.4 L772.8 713.8 L766.8 715.9 L760.6 717.8 L754.3 719.6 L747.9 721.1 L741.3 722.4 L734.7 723.6 L728.0 724.5 L721.3 725.2 L714.5 725.7 L707.7 726.0 L700.9 726.1 L694.1 725.9 L687.3 725.5 L680.6 725.0 L673.9 724.2 L667.3 723.2 L660.7 721.9 L654.3 720.5 L648.0 718.9 L641.8 717.1 L635.8 715.0 L629.9 712.8 L624.2 710.5 L618.6 707.9 L613.3 705.2 L608.2 702.3 L603.3 699.2 L598.6 696.0 L594.2 692.7 L590.0 689.2 L586.0 685.6 L582.3 681.9 L578.9 678.1 L575.8 674.2Z" fill="none" stroke="#d4dae4" stroke-width="1.6"/><path d="M577.4 673.5 L572.2 675.6 L566.9 692.2 L569.4 705.9 L572.4 710.8" fill="none" stroke="#15110e" stroke-width="1"/><path d="M777.7 710.3 L780.8 713.9 L784.3 732.5 L783.2 745.8 L781.6 749.9" fill="none" stroke="#15110e" stroke-width="1"/><path d="M1015.1 612.0 L1018.4 615.2 L1020.9 633.3 L1018.3 646.5 L1016.1 650.8" fill="none" stroke="#15110e" stroke-width="1"/><path d="M397.5 437.2 L392.8 438.8 L388.8 454.4 L392.0 467.7 L395.1 472.6" fill="none" stroke="#15110e" stroke-width="1"/><path d="M501.3 398.0 L499.6 396.2 L497.5 394.4 L495.2 392.8 L492.6 391.3 L489.9 389.9 L486.9 388.8 L483.7 387.8 L480.3 386.9 L476.9 386.3 L473.3 385.8 L469.6 385.5 L465.9 385.4 L462.1 385.5 L458.4 385.8 L454.6 386.3 L450.9 387.0 L447.3 387.9 L443.8 388.9 L440.4 390.1 L437.2 391.4 L434.2 392.9 L431.3 394.6 L428.7 396.4 L426.4 398.3 L424.2 400.2 L422.4 402.3 L420.9 404.5 L419.7 406.7 L418.7 408.9 L418.2 411.2 L417.9 413.5 L418.0 415.7 L418.4 417.9 L419.2 420.1 L420.2 422.2 L421.6 424.3 L423.3 426.2 L425.3 428.0 L427.6 429.7 L430.2 431.3 L433.0 432.7 L436.1 434.0 L439.3 435.0 L442.7 435.9 L446.3 436.6 L450.0 437.1 L453.7 437.4 L457.6 437.5 L461.5 437.4 L465.3 437.1 L469.2 436.5 L473.0 435.8 L476.7 434.9 L480.3 433.8 L483.7 432.6 L487.0 431.1 L490.0 429.6 L492.9 427.9 L495.5 426.0 L497.8 424.1 L499.8 422.0 L501.6 419.9 L503.0 417.7 L504.1 415.5 L504.9 413.2 L505.4 410.9 L505.6 408.7 L505.4 406.4 L504.8 404.2 L504.0 402.1 L502.8 400.0Z" fill="rgba(25,55,140,0.18)" stroke="#1d3d8c" stroke-width="1"/><path d="M494.4 400.3 L492.9 398.7 L491.1 397.2 L489.2 395.8 L487.0 394.5 L484.6 393.4 L482.1 392.4 L479.4 391.5 L476.5 390.8 L473.6 390.2 L470.5 389.8 L467.4 389.6 L464.2 389.5 L461.0 389.6 L457.8 389.9 L454.7 390.3 L451.5 390.9 L448.4 391.6 L445.5 392.5 L442.6 393.5 L439.9 394.6 L437.3 395.9 L434.9 397.3 L432.7 398.8 L430.6 400.4 L428.9 402.1 L427.3 403.9 L426.0 405.7 L425.0 407.6 L424.2 409.5 L423.7 411.4 L423.5 413.3 L423.6 415.3 L423.9 417.2 L424.6 419.0 L425.5 420.8 L426.7 422.5 L428.1 424.2 L429.9 425.7 L431.8 427.2 L434.0 428.5 L436.4 429.7 L438.9 430.7 L441.7 431.6 L444.6 432.4 L447.6 432.9 L450.7 433.4 L453.9 433.6 L457.2 433.7 L460.5 433.6 L463.7 433.3 L467.0 432.9 L470.2 432.3 L473.3 431.5 L476.4 430.6 L479.3 429.5 L482.1 428.3 L484.7 427.0 L487.1 425.5 L489.3 424.0 L491.2 422.3 L493.0 420.6 L494.5 418.8 L495.7 416.9 L496.7 415.1 L497.4 413.1 L497.8 411.2 L497.9 409.3 L497.7 407.4 L497.3 405.5 L496.6 403.7 L495.6 401.9Z" fill="none" stroke="#1d3d8c" stroke-width="0.9"/><path d="M500.0 446.2 L498.5 444.6 L496.8 443.1 L494.9 441.7 L492.8 440.5 L490.5 439.3 L488.0 438.3 L485.4 437.4 L482.6 436.7 L479.7 436.2 L476.7 435.8 L473.7 435.5 L470.6 435.5 L467.5 435.6 L464.4 435.8 L461.3 436.2 L458.2 436.8 L455.2 437.5 L452.3 438.4 L449.5 439.4 L446.9 440.6 L444.4 441.9 L442.0 443.3 L439.9 444.8 L437.9 446.4 L436.2 448.1 L434.7 449.9 L433.4 451.7 L432.4 453.6 L431.7 455.5 L431.2 457.4 L431.0 459.3 L431.1 461.2 L431.5 463.1 L432.1 465.0 L433.0 466.8 L434.2 468.5 L435.6 470.1 L437.3 471.7 L439.2 473.1 L441.3 474.4 L443.6 475.6 L446.1 476.7 L448.8 477.6 L451.6 478.3 L454.6 478.9 L457.6 479.3 L460.7 479.6 L463.9 479.7 L467.1 479.6 L470.3 479.3 L473.5 478.9 L476.6 478.3 L479.6 477.5 L482.6 476.6 L485.4 475.5 L488.1 474.3 L490.6 473.0 L493.0 471.5 L495.1 470.0 L497.0 468.3 L498.7 466.6 L500.2 464.8 L501.4 462.9 L502.3 461.0 L502.9 459.1 L503.3 457.2 L503.5 455.3 L503.3 453.4 L502.9 451.5 L502.2 449.7 L501.2 447.9Z" fill="rgba(90,110,190,0.30)" stroke="#2a4a9a" stroke-width="0.8"/><path d="M503.4 421.5 L501.7 419.6 L499.7 417.9 L497.4 416.2 L494.8 414.7 L492.0 413.4 L489.1 412.2 L485.9 411.2 L482.6 410.3 L479.2 409.7 L475.6 409.2 L472.0 408.9 L468.3 408.9 L464.5 409.0 L460.8 409.3 L457.1 409.8 L453.4 410.4 L449.9 411.3 L446.4 412.3 L443.1 413.5 L439.9 414.9 L436.9 416.4 L434.0 418.1 L431.5 419.8 L429.1 421.7 L427.0 423.7 L425.2 425.8 L423.7 428.0 L422.5 430.2 L421.6 432.5 L421.0 434.7 L420.8 437.0 L420.8 439.3 L421.3 441.5 L422.0 443.7 L423.1 445.9 L424.5 447.9 L426.2 449.8 L428.2 451.7 L430.4 453.4 L433.0 455.0 L435.8 456.4 L438.8 457.6 L442.0 458.7 L445.4 459.6 L448.9 460.3 L452.6 460.8 L456.3 461.1 L460.1 461.2 L464.0 461.1 L467.8 460.7 L471.6 460.2 L475.4 459.5 L479.1 458.6 L482.6 457.5 L486.0 456.2 L489.2 454.8 L492.3 453.2 L495.1 451.5 L497.6 449.6 L499.9 447.7 L502.0 445.6 L503.7 443.5 L505.1 441.3 L506.2 439.0 L507.0 436.8 L507.5 434.5 L507.6 432.2 L507.4 430.0 L506.9 427.8 L506.1 425.6 L504.9 423.5Z" fill="#5a3e36" stroke="#dcd8d8" stroke-width="2.1"/><g clip-path="url(#h1c)"><path d="M495.4 421.2 L494.0 419.7 L492.4 418.3 L490.5 417.0 L488.5 415.8 L486.3 414.7 L483.9 413.7 L481.4 412.9 L478.7 412.2 L475.9 411.7 L473.1 411.3 L470.1 411.1 L467.2 411.0 L464.2 411.1 L461.2 411.4 L458.2 411.8 L455.3 412.3 L452.4 413.0 L449.6 413.8 L446.9 414.8 L444.4 415.9 L442.0 417.1 L439.7 418.4 L437.6 419.9 L435.8 421.4 L434.1 423.0 L432.7 424.7 L431.4 426.4 L430.5 428.2 L429.8 430.0 L429.3 431.8 L429.1 433.6 L429.2 435.4 L429.5 437.2 L430.1 439.0 L431.0 440.7 L432.1 442.3 L433.5 443.9 L435.1 445.3 L436.9 446.7 L439.0 447.9 L441.2 449.0 L443.6 450.0 L446.2 450.9 L448.9 451.6 L451.7 452.2 L454.6 452.5 L457.6 452.8 L460.7 452.9 L463.7 452.8 L466.8 452.5 L469.8 452.1 L472.8 451.5 L475.8 450.8 L478.6 449.9 L481.3 448.9 L483.9 447.8 L486.3 446.5 L488.6 445.2 L490.6 443.7 L492.5 442.1 L494.1 440.5 L495.5 438.8 L496.7 437.0 L497.6 435.2 L498.2 433.4 L498.6 431.6 L498.7 429.8 L498.6 428.0 L498.1 426.2 L497.5 424.5 L496.6 422.8Z" fill="#a3161a" stroke="#2a0e0a" stroke-width="1"/><path d="M505.7 444.6 L504.0 442.8 L502.0 441.0 L499.8 439.4 L497.4 438.0 L494.7 436.7 L491.8 435.5 L488.8 434.5 L485.6 433.7 L482.3 433.0 L478.9 432.6 L475.3 432.3 L471.8 432.2 L468.2 432.3 L464.6 432.6 L461.0 433.1 L457.5 433.8 L454.0 434.6 L450.7 435.6 L447.5 436.8 L444.4 438.1 L441.5 439.6 L438.8 441.2 L436.3 443.0 L434.1 444.8 L432.1 446.8 L430.3 448.8 L428.9 450.9 L427.7 453.1 L426.8 455.3 L426.3 457.5 L426.1 459.7 L426.1 462.0 L426.5 464.1 L427.3 466.3 L428.3 468.4 L429.7 470.4 L431.3 472.3 L433.2 474.1 L435.4 475.7 L437.9 477.3 L440.6 478.6 L443.5 479.9 L446.6 480.9 L449.8 481.8 L453.2 482.4 L456.8 482.9 L460.4 483.2 L464.0 483.3 L467.7 483.2 L471.4 482.9 L475.1 482.4 L478.7 481.7 L482.3 480.8 L485.7 479.7 L488.9 478.5 L492.1 477.1 L495.0 475.5 L497.7 473.9 L500.1 472.1 L502.4 470.1 L504.3 468.1 L506.0 466.0 L507.4 463.9 L508.4 461.7 L509.2 459.5 L509.6 457.3 L509.8 455.0 L509.6 452.8 L509.1 450.7 L508.2 448.6 L507.1 446.6Z" fill="url(#wallg)" stroke="#2a120c" stroke-width="1"/><path d="M503.5 458.3 L501.9 456.5 L500.1 454.9 L498.0 453.4 L495.8 452.1 L493.3 450.9 L490.7 449.8 L487.9 448.9 L484.9 448.1 L481.8 447.5 L478.7 447.1 L475.4 446.8 L472.1 446.7 L468.8 446.8 L465.5 447.1 L462.2 447.6 L459.0 448.2 L455.8 449.0 L452.7 449.9 L449.7 451.0 L446.9 452.2 L444.2 453.6 L441.7 455.1 L439.4 456.7 L437.3 458.5 L435.5 460.3 L433.9 462.2 L432.5 464.1 L431.5 466.2 L430.7 468.2 L430.2 470.3 L430.0 472.3 L430.1 474.4 L430.4 476.4 L431.1 478.4 L432.1 480.3 L433.3 482.2 L434.8 484.0 L436.6 485.6 L438.6 487.2 L440.9 488.6 L443.4 489.9 L446.1 491.0 L448.9 492.0 L451.9 492.8 L455.1 493.4 L458.3 493.9 L461.6 494.1 L465.0 494.2 L468.4 494.1 L471.8 493.8 L475.2 493.3 L478.6 492.7 L481.8 491.9 L485.0 490.9 L488.0 489.7 L490.8 488.4 L493.5 487.0 L496.0 485.4 L498.3 483.8 L500.4 482.0 L502.2 480.1 L503.7 478.2 L505.0 476.2 L506.0 474.2 L506.7 472.1 L507.1 470.0 L507.2 468.0 L507.0 465.9 L506.5 463.9 L505.8 462.0 L504.8 460.1Z" fill="none" stroke="#3a1812" stroke-width="0.9"/><path d="M465.3 430.6 Q462.3 446.6 481.6 457.5" fill="none" stroke="#3a1812" stroke-width="0.9"/></g><path d="M503.4 421.5 L501.7 419.6 L499.7 417.9 L497.4 416.2 L494.8 414.7 L492.0 413.4 L489.1 412.2 L485.9 411.2 L482.6 410.3 L479.2 409.7 L475.6 409.2 L472.0 408.9 L468.3 408.9 L464.5 409.0 L460.8 409.3 L457.1 409.8 L453.4 410.4 L449.9 411.3 L446.4 412.3 L443.1 413.5 L439.9 414.9 L436.9 416.4 L434.0 418.1 L431.5 419.8 L429.1 421.7 L427.0 423.7 L425.2 425.8 L423.7 428.0 L422.5 430.2 L421.6 432.5 L421.0 434.7 L420.8 437.0 L420.8 439.3 L421.3 441.5 L422.0 443.7 L423.1 445.9 L424.5 447.9 L426.2 449.8 L428.2 451.7 L430.4 453.4 L433.0 455.0 L435.8 456.4 L438.8 457.6 L442.0 458.7 L445.4 459.6 L448.9 460.3 L452.6 460.8 L456.3 461.1 L460.1 461.2 L464.0 461.1 L467.8 460.7 L471.6 460.2 L475.4 459.5 L479.1 458.6 L482.6 457.5 L486.0 456.2 L489.2 454.8 L492.3 453.2 L495.1 451.5 L497.6 449.6 L499.9 447.7 L502.0 445.6 L503.7 443.5 L505.1 441.3 L506.2 439.0 L507.0 436.8 L507.5 434.5 L507.6 432.2 L507.4 430.0 L506.9 427.8 L506.1 425.6 L504.9 423.5Z" fill="none" stroke="#dcd8d8" stroke-width="2.1"/><path d="M990.3 546.9 L987.8 544.7 L985.0 542.6 L982.0 540.7 L978.8 538.9 L975.3 537.3 L971.7 536.0 L967.9 534.8 L964.0 533.8 L960.0 533.0 L956.0 532.4 L951.9 532.1 L947.8 532.0 L943.8 532.1 L939.8 532.5 L935.9 533.1 L932.1 533.9 L928.5 534.9 L925.0 536.1 L921.7 537.5 L918.6 539.1 L915.8 540.9 L913.2 542.9 L910.9 545.0 L909.0 547.2 L907.3 549.6 L906.0 552.0 L905.0 554.6 L904.3 557.2 L904.0 559.8 L904.1 562.5 L904.6 565.2 L905.3 567.9 L906.5 570.6 L908.0 573.1 L909.8 575.7 L912.0 578.1 L914.5 580.4 L917.2 582.6 L920.3 584.6 L923.5 586.4 L927.0 588.1 L930.7 589.6 L934.6 590.8 L938.6 591.9 L942.7 592.7 L946.9 593.3 L951.1 593.7 L955.3 593.8 L959.5 593.6 L963.6 593.2 L967.6 592.6 L971.5 591.8 L975.3 590.7 L978.8 589.4 L982.1 587.9 L985.2 586.2 L988.1 584.3 L990.6 582.3 L992.8 580.1 L994.8 577.8 L996.3 575.4 L997.6 572.8 L998.4 570.2 L998.9 567.6 L999.1 564.9 L998.9 562.2 L998.3 559.5 L997.4 556.9 L996.1 554.3 L994.5 551.7 L992.6 549.3Z" fill="rgba(25,55,140,0.18)" stroke="#1d3d8c" stroke-width="1"/><path d="M982.6 549.3 L980.4 547.4 L978.1 545.6 L975.5 544.0 L972.7 542.5 L969.8 541.1 L966.7 539.9 L963.5 538.9 L960.2 538.1 L956.8 537.4 L953.4 536.9 L949.9 536.7 L946.5 536.6 L943.0 536.7 L939.6 537.0 L936.3 537.5 L933.1 538.2 L930.0 539.0 L927.0 540.1 L924.2 541.3 L921.6 542.6 L919.2 544.2 L917.0 545.8 L915.1 547.6 L913.4 549.5 L912.0 551.5 L910.9 553.6 L910.0 555.8 L909.5 558.0 L909.3 560.3 L909.3 562.5 L909.7 564.8 L910.4 567.1 L911.4 569.3 L912.6 571.5 L914.2 573.7 L916.0 575.7 L918.1 577.7 L920.5 579.5 L923.0 581.2 L925.8 582.8 L928.8 584.2 L931.9 585.4 L935.2 586.5 L938.6 587.4 L942.1 588.1 L945.6 588.6 L949.1 588.9 L952.7 589.0 L956.3 588.8 L959.7 588.5 L963.2 588.0 L966.5 587.3 L969.6 586.4 L972.6 585.3 L975.5 584.0 L978.1 582.6 L980.5 581.0 L982.6 579.3 L984.5 577.4 L986.2 575.5 L987.5 573.4 L988.6 571.3 L989.3 569.1 L989.8 566.8 L989.9 564.5 L989.7 562.3 L989.3 560.0 L988.5 557.7 L987.4 555.5 L986.1 553.4 L984.4 551.3Z" fill="none" stroke="#1d3d8c" stroke-width="0.9"/><path d="M981.0 596.9 L978.9 595.0 L976.6 593.2 L974.1 591.6 L971.4 590.1 L968.6 588.7 L965.6 587.5 L962.5 586.5 L959.3 585.7 L956.0 585.0 L952.6 584.5 L949.3 584.3 L945.9 584.2 L942.5 584.3 L939.2 584.6 L936.0 585.1 L932.9 585.8 L929.8 586.6 L927.0 587.7 L924.2 588.9 L921.7 590.2 L919.4 591.8 L917.2 593.4 L915.4 595.2 L913.7 597.1 L912.4 599.1 L911.3 601.2 L910.5 603.4 L909.9 605.6 L909.7 607.8 L909.8 610.1 L910.1 612.4 L910.8 614.6 L911.8 616.9 L913.0 619.1 L914.5 621.2 L916.3 623.2 L918.3 625.2 L920.6 627.0 L923.1 628.7 L925.8 630.3 L928.7 631.7 L931.7 632.9 L934.9 634.0 L938.2 634.9 L941.6 635.6 L945.0 636.1 L948.5 636.4 L952.0 636.4 L955.4 636.3 L958.8 636.0 L962.1 635.5 L965.3 634.8 L968.4 633.9 L971.3 632.8 L974.1 631.5 L976.6 630.1 L979.0 628.5 L981.1 626.8 L982.9 624.9 L984.5 623.0 L985.8 620.9 L986.8 618.8 L987.6 616.6 L988.0 614.4 L988.1 612.1 L988.0 609.8 L987.5 607.5 L986.8 605.3 L985.7 603.1 L984.4 600.9 L982.8 598.8Z" fill="rgba(90,110,190,0.30)" stroke="#2a4a9a" stroke-width="0.8"/><path d="M988.0 571.1 L985.6 568.8 L982.8 566.7 L979.8 564.8 L976.6 563.0 L973.2 561.4 L969.6 560.0 L965.8 558.8 L962.0 557.8 L958.0 557.1 L954.0 556.5 L950.0 556.2 L946.0 556.1 L941.9 556.2 L938.0 556.6 L934.1 557.2 L930.4 558.0 L926.7 559.0 L923.3 560.2 L920.0 561.6 L917.0 563.2 L914.2 565.0 L911.7 567.0 L909.4 569.1 L907.4 571.3 L905.8 573.7 L904.4 576.2 L903.5 578.7 L902.8 581.4 L902.5 584.0 L902.6 586.7 L903.0 589.4 L903.8 592.1 L905.0 594.8 L906.4 597.4 L908.3 599.9 L910.4 602.3 L912.8 604.6 L915.6 606.8 L918.6 608.8 L921.8 610.7 L925.3 612.4 L929.0 613.9 L932.8 615.1 L936.7 616.2 L940.8 617.0 L944.9 617.6 L949.1 617.9 L953.3 618.0 L957.4 617.9 L961.5 617.5 L965.5 616.9 L969.3 616.1 L973.1 615.0 L976.6 613.7 L979.9 612.2 L982.9 610.5 L985.7 608.6 L988.3 606.5 L990.5 604.3 L992.4 602.0 L993.9 599.6 L995.2 597.0 L996.0 594.4 L996.5 591.8 L996.7 589.1 L996.5 586.4 L995.9 583.7 L995.0 581.0 L993.7 578.4 L992.2 575.9 L990.3 573.4Z" fill="#5a3e36" stroke="#dcd8d8" stroke-width="2.1"/><g clip-path="url(#h2c)"><path d="M980.7 571.1 L978.7 569.4 L976.5 567.7 L974.1 566.1 L971.5 564.7 L968.7 563.4 L965.9 562.3 L962.9 561.3 L959.8 560.5 L956.6 559.9 L953.4 559.5 L950.1 559.2 L946.9 559.1 L943.7 559.2 L940.5 559.5 L937.4 560.0 L934.4 560.6 L931.5 561.4 L928.7 562.4 L926.1 563.6 L923.7 564.9 L921.4 566.3 L919.4 567.9 L917.6 569.6 L916.0 571.4 L914.7 573.3 L913.6 575.2 L912.8 577.3 L912.3 579.4 L912.1 581.5 L912.2 583.7 L912.6 585.9 L913.2 588.0 L914.1 590.1 L915.3 592.2 L916.8 594.2 L918.5 596.1 L920.5 598.0 L922.6 599.7 L925.0 601.3 L927.6 602.8 L930.4 604.1 L933.3 605.3 L936.4 606.3 L939.6 607.2 L942.8 607.8 L946.1 608.3 L949.4 608.6 L952.8 608.7 L956.1 608.5 L959.3 608.2 L962.5 607.8 L965.6 607.1 L968.6 606.2 L971.4 605.2 L974.0 604.0 L976.5 602.6 L978.7 601.1 L980.7 599.5 L982.5 597.8 L984.0 595.9 L985.3 594.0 L986.3 591.9 L987.0 589.9 L987.4 587.7 L987.5 585.6 L987.4 583.4 L986.9 581.3 L986.2 579.1 L985.2 577.0 L984.0 575.0 L982.4 573.0Z" fill="#a3161a" stroke="#2a0e0a" stroke-width="1"/><path d="M987.1 595.1 L984.7 592.9 L982.1 590.9 L979.2 589.0 L976.1 587.3 L972.8 585.7 L969.3 584.3 L965.7 583.2 L962.0 582.2 L958.2 581.4 L954.4 580.9 L950.5 580.6 L946.6 580.5 L942.7 580.6 L938.9 581.0 L935.2 581.5 L931.6 582.3 L928.1 583.3 L924.8 584.5 L921.6 585.9 L918.7 587.5 L916.0 589.2 L913.5 591.1 L911.4 593.2 L909.5 595.4 L907.9 597.7 L906.6 600.1 L905.7 602.6 L905.1 605.1 L904.8 607.7 L904.9 610.4 L905.3 613.0 L906.0 615.6 L907.1 618.2 L908.6 620.8 L910.3 623.2 L912.4 625.6 L914.7 627.8 L917.4 630.0 L920.3 631.9 L923.4 633.7 L926.7 635.4 L930.2 636.8 L933.9 638.1 L937.7 639.1 L941.6 639.9 L945.6 640.5 L949.6 640.8 L953.6 640.9 L957.6 640.8 L961.6 640.4 L965.4 639.8 L969.1 639.0 L972.7 637.9 L976.1 636.6 L979.3 635.2 L982.2 633.5 L984.9 631.7 L987.3 629.7 L989.5 627.6 L991.3 625.3 L992.8 622.9 L994.0 620.4 L994.8 617.9 L995.3 615.3 L995.4 612.7 L995.3 610.0 L994.7 607.4 L993.8 604.8 L992.6 602.3 L991.1 599.8 L989.3 597.4Z" fill="url(#wallg)" stroke="#2a120c" stroke-width="1"/><path d="M982.0 609.1 L979.8 607.1 L977.4 605.2 L974.7 603.4 L971.9 601.8 L968.8 600.3 L965.6 599.1 L962.3 598.0 L958.9 597.1 L955.4 596.4 L951.8 595.9 L948.2 595.6 L944.6 595.5 L941.1 595.6 L937.5 595.9 L934.1 596.5 L930.8 597.2 L927.5 598.1 L924.5 599.2 L921.6 600.5 L918.9 602.0 L916.4 603.6 L914.1 605.4 L912.1 607.3 L910.4 609.3 L908.9 611.5 L907.7 613.7 L906.9 616.0 L906.3 618.4 L906.1 620.8 L906.1 623.3 L906.5 625.7 L907.2 628.2 L908.2 630.6 L909.5 632.9 L911.2 635.2 L913.1 637.4 L915.2 639.5 L917.7 641.4 L920.3 643.3 L923.2 645.0 L926.3 646.5 L929.5 647.8 L932.9 649.0 L936.4 649.9 L940.0 650.6 L943.7 651.2 L947.4 651.5 L951.1 651.6 L954.7 651.5 L958.4 651.1 L961.9 650.6 L965.3 649.8 L968.6 648.8 L971.7 647.6 L974.7 646.3 L977.4 644.7 L979.9 643.0 L982.1 641.2 L984.1 639.2 L985.8 637.1 L987.2 634.9 L988.3 632.6 L989.0 630.3 L989.5 627.9 L989.6 625.4 L989.5 623.0 L989.0 620.5 L988.2 618.1 L987.1 615.7 L985.7 613.4 L984.0 611.2Z" fill="none" stroke="#3a1812" stroke-width="0.9"/><path d="M950.6 582.6 Q947.6 598.6 975.6 613.7" fill="none" stroke="#3a1812" stroke-width="0.9"/></g><path d="M988.0 571.1 L985.6 568.8 L982.8 566.7 L979.8 564.8 L976.6 563.0 L973.2 561.4 L969.6 560.0 L965.8 558.8 L962.0 557.8 L958.0 557.1 L954.0 556.5 L950.0 556.2 L946.0 556.1 L941.9 556.2 L938.0 556.6 L934.1 557.2 L930.4 558.0 L926.7 559.0 L923.3 560.2 L920.0 561.6 L917.0 563.2 L914.2 565.0 L911.7 567.0 L909.4 569.1 L907.4 571.3 L905.8 573.7 L904.4 576.2 L903.5 578.7 L902.8 581.4 L902.5 584.0 L902.6 586.7 L903.0 589.4 L903.8 592.1 L905.0 594.8 L906.4 597.4 L908.3 599.9 L910.4 602.3 L912.8 604.6 L915.6 606.8 L918.6 608.8 L921.8 610.7 L925.3 612.4 L929.0 613.9 L932.8 615.1 L936.7 616.2 L940.8 617.0 L944.9 617.6 L949.1 617.9 L953.3 618.0 L957.4 617.9 L961.5 617.5 L965.5 616.9 L969.3 616.1 L973.1 615.0 L976.6 613.7 L979.9 612.2 L982.9 610.5 L985.7 608.6 L988.3 606.5 L990.5 604.3 L992.4 602.0 L993.9 599.6 L995.2 597.0 L996.0 594.4 L996.5 591.8 L996.7 589.1 L996.5 586.4 L995.9 583.7 L995.0 581.0 L993.7 578.4 L992.2 575.9 L990.3 573.4Z" fill="none" stroke="#dcd8d8" stroke-width="2.1"/><clipPath id="noface"><path clip-rule="evenodd" d="M0 0H1514V1011H0Z M397.5 437.2 L395.4 433.1 L394.8 428.8 L396.0 424.3 L398.7 420.1 L402.9 416.2 L408.3 412.9 L414.6 410.3 L488.8 386.1 L495.8 383.9 L502.8 381.8 L509.8 379.9 L516.9 378.0 L524.1 376.2 L531.3 374.6 L538.5 373.1 L545.8 371.7 L553.1 370.4 L560.5 369.2 L567.9 368.1 L575.3 367.1 L582.7 366.3 L590.1 365.6 L597.6 365.0 L605.1 364.5 L612.5 364.1 L620.0 363.8 L627.5 363.6 L635.0 363.6 L642.4 363.7 L649.9 363.9 L657.3 364.2 L664.8 364.6 L672.1 365.1 L679.5 365.8 L686.8 366.6 L694.1 367.4 L701.4 368.4 L708.6 369.6 L715.8 370.8 L722.9 372.1 L730.0 373.6 L737.0 375.1 L744.0 376.8 L750.9 378.6 L757.7 380.5 L764.4 382.5 L771.1 384.6 L777.7 386.8 L784.2 389.2 L790.6 391.6 L797.0 394.1 L803.2 396.8 L809.4 399.6 L815.4 402.4 L821.3 405.4 L827.2 408.4 L832.9 411.6 L838.5 414.9 L843.9 418.2 L849.3 421.7 L854.5 425.3 L859.6 428.9 L864.5 432.6 L869.3 436.5 L874.0 440.4 L878.5 444.4 L882.9 448.5 L1022.3 582.9 L1025.1 586.2 L1027.1 589.8 L1028.2 593.4 L1028.3 597.1 L1027.4 600.7 L1025.6 604.1 L1022.9 607.1 L1019.3 609.8 L1015.1 612.0 L777.7 710.3 L771.9 712.6 L766.0 714.7 L759.9 716.6 L753.6 718.3 L747.3 719.8 L740.8 721.1 L734.3 722.3 L727.7 723.2 L721.1 723.9 L714.4 724.4 L707.7 724.6 L700.9 724.7 L694.2 724.5 L687.5 724.2 L680.9 723.6 L674.3 722.8 L667.8 721.8 L661.3 720.6 L655.0 719.2 L648.7 717.6 L642.6 715.8 L636.7 713.8 L630.9 711.7 L625.2 709.3 L619.8 706.8 L614.5 704.1 L609.5 701.2 L604.6 698.2 L600.0 695.1 L595.6 691.8 L591.5 688.4 L587.6 684.8 L583.9 681.2 L580.5 677.4 L577.4 673.5Z"/></clipPath><g clip-path="url(#noface)"><ellipse cx="453.5" cy="405" rx="35.5" ry="20.5" fill="#6e6357" stroke="#1e1a16" stroke-width="2.2"/><ellipse cx="455" cy="409" rx="29" ry="16" fill="#938778" stroke="#3b332c" stroke-width="1"/></g><path d="M943.5 612.5 L951.5 612.5 L951.5 622.5 L958.5 622.5 L947.5 635 L936.5 622.5 L943.5 622.5 Z" fill="#2c9ddb" stroke="#f2f4f8" stroke-width="3.2" stroke-linejoin="round"/><path d="M943.5 612.5 L951.5 612.5 L951.5 622.5 L958.5 622.5 L947.5 635 L936.5 622.5 L943.5 622.5 Z" fill="#2c9ddb" stroke="#1a4f86" stroke-width="1" stroke-linejoin="round"/><path d="M884 689 Q930 695 981 656" fill="none" stroke="rgba(235,235,235,0.55)" stroke-width="1.2"/><ellipse cx="941.5" cy="683.5" rx="7" ry="7.8" fill="#f4f4f4" stroke="#707070" stroke-width="1"/><circle cx="941" cy="684" r="2" fill="none" stroke="#666" stroke-width="0.8"/></svg>

<!-- top bar -->
<div id="topbar" class="a"></div>
<div id="tab" class="a"></div>
<div class="t" style="left:686px;top:12px;font-size:13px;color:#333">biçim malzeme 2 v1*</div>

<!-- toolbar -->
<div id="toolbar" class="a"></div>
<div class="a" style="left:8px;top:43px;width:110px;height:62px;border:2px solid #dedede;border-radius:5px"></div>
<div class="t" style="left:36px;top:68px;font-size:12px;font-weight:bold;color:#333;letter-spacing:-0.3px">DESIGN</div>
<div class="t tabl" style="left:146px;color:#3d8fc0">SOLID</div>
<div class="a" style="left:134px;top:54px;width:59px;height:3px;background:#2a8ac4"></div>
<div class="t tabl" style="left:229px">SURFACE</div>
<div class="t tabl" style="left:332px">MESH</div>
<div class="t tabl" style="left:410px">SHEET METAL</div>
<div class="t tabl" style="left:538px">TOOLS</div>
<div class="t grp" style="left:225px">CREATE<span class="tri"></span></div>
<div class="t grp" style="left:497px">MODIFY<span class="tri"></span></div>
<div class="t grp" style="left:673px">ASSEMBLE<span class="tri"></span></div>
<div class="t grp" style="left:776px">CONSTRUCT<span class="tri"></span></div>
<div class="t grp" style="left:890px">INSPECT<span class="tri"></span></div>
<div class="t grp" style="left:979px">INSERT<span class="tri"></span></div>
<div class="t grp" style="left:1058px">SELECT<span class="tri"></span></div>
<div class="sep" style="left:390px"></div>
<div class="sep" style="left:659px"></div>
<div class="sep" style="left:762px"></div>
<div class="sep" style="left:876px"></div>
<div class="sep" style="left:965px"></div>
<div class="sep" style="left:1044px"></div>

<svg class="a" style="left:0;top:0" width="1514" height="115" viewBox="0 0 1514 115"><rect x="5" y="10" width="4" height="4" fill="#5c5c5c"/><rect x="5" y="15" width="4" height="4" fill="#5c5c5c"/><rect x="5" y="20" width="4" height="4" fill="#5c5c5c"/><rect x="10" y="10" width="4" height="4" fill="#5c5c5c"/><rect x="10" y="15" width="4" height="4" fill="#5c5c5c"/><rect x="10" y="20" width="4" height="4" fill="#5c5c5c"/><rect x="15" y="10" width="4" height="4" fill="#5c5c5c"/><rect x="15" y="15" width="4" height="4" fill="#5c5c5c"/><rect x="15" y="20" width="4" height="4" fill="#5c5c5c"/><path d="M38 9 H47 L51 13 V25 H38 Z" fill="#5c5c5c"/><path d="M47 9 V13 H51" fill="#9a9a9a"/><path d="M57 15 H64 L60.5 19 Z" fill="#5c5c5c"/><path d="M83 11 Q83 10 84 10 H95 L97 12 V23 Q97 24 96 24 H84 Q83 24 83 23 Z" fill="#5c5c5c"/><rect x="86" y="11" width="7" height="4" fill="#cbcbcb"/><rect x="86" y="18" width="8" height="6" fill="#cbcbcb"/><rect x="88" y="19.5" width="4" height="4.5" fill="#5c5c5c"/><path d="M117 15 L122 11 V13.5 Q129 13.5 129 21 L128 23 Q127 17 122 17.5 V20 Z" fill="#5c5c5c"/><path d="M136 15 H143 L139.5 19 Z" fill="#5c5c5c"/><path d="M168 15 L163 11 V13.5 Q156 13.5 156 21 L157 23 Q158 17 163 17.5 V20 Z" fill="#9c9c9c"/><path d="M175 15 H182 L178.5 19 Z" fill="#9c9c9c"/><path d="M666 14 L672 11 L680 13 L680 21 L674 24 L666 22 Z" fill="#8a8a8a"/><path d="M666 14 L672 11 L680 13 L674 16 Z" fill="#b0b0b0"/><path d="M674 16 L680 13 L680 21 L674 24 Z" fill="#6a6a6a"/><path d="M1282.5 14.5 L1290.5 22.5 M1290.5 14.5 L1282.5 22.5" stroke="#555" stroke-width="1.4"/><rect x="1301" y="5" width="28" height="27" rx="2" fill="#bdbdbd"/><path d="M1315 12 V26 M1308 19 H1322" stroke="#7a7a7a" stroke-width="3"/><circle cx="1349" cy="17" r="7.5" fill="#5e5e5e"/><path d="M1345 17 A4 4 0 1 1 1349 21" stroke="#cbcbcb" stroke-width="1.6" fill="none"/><path d="M1349 13 l3 -2 v4z" fill="#cbcbcb"/><circle cx="1382" cy="17" r="7.5" fill="#5e5e5e"/><circle cx="1382" cy="17" r="5.6" fill="#cbcbcb"/><circle cx="1382" cy="17" r="4.8" fill="#5e5e5e"/><path d="M1382 14 V17.5 H1385" stroke="#cbcbcb" stroke-width="1.2" fill="none"/><path d="M1408 21 Q1410 19 1410 15 Q1410 10 1414.5 10 Q1419 10 1419 15 Q1419 19 1421 21 Z" fill="#5e5e5e"/><circle cx="1414.5" cy="23" r="1.6" fill="#5e5e5e"/><circle cx="1448" cy="17" r="7.5" fill="#5e5e5e"/><path d="M1445.5 14.5 Q1445.5 11.5 1448 11.5 Q1450.8 11.5 1450.8 14.2 Q1450.8 16 1448.2 17 V18.5" stroke="#cbcbcb" stroke-width="1.8" fill="none"/><circle cx="1448.2" cy="21" r="1.1" fill="#cbcbcb"/><circle cx="1489" cy="17" r="11.5" fill="#9fb3c8"/><path d="M1480 27 Q1481 20 1486 19 Q1483 16 1484 12 Q1486 8 1490 8.5 Q1494 9 1494 13 Q1494 17 1491.5 19 Q1497 20 1498 25 Q1494 29 1489 28.5 Q1484 28.5 1480 27Z" fill="#4c6a8c"/><g transform="translate(134,60) scale(1.0)"><rect x="1.5" y="1.5" width="26" height="26" fill="none" stroke="#666" stroke-width="1"/><rect x="0" y="0" width="3" height="3" fill="#555"/><rect x="26" y="0" width="3" height="3" fill="#555"/><rect x="0" y="26" width="3" height="3" fill="#555"/><rect x="7" y="7" width="3" height="3" fill="#555"/><rect x="19" y="7" width="3" height="3" fill="#555"/><rect x="7" y="19" width="3" height="3" fill="#555"/><path d="M10 8.5 H19 M8.5 10 V19" stroke="#666" stroke-width="1" stroke-dasharray="2 1.5"/><path d="M20.5 10 Q20 19 10 20.5" stroke="#555" stroke-width="1.2" fill="none"/><path d="M24.5 19.5 V31 M19 25.2 H30" stroke="#2ba84a" stroke-width="3.6"/></g><g transform="translate(176,60) scale(1.0)"><path d="M0 27 H17 L21 23 V27 L17 31 H0Z" fill="#c4c4c4"/><path d="M0 5 L4 1 H21 L17 5Z" fill="#93c9f2"/><rect x="0" y="5" width="17" height="22" fill="#5aa5e4"/><path d="M17 5 L21 1 V23 L17 27Z" fill="#3b88cf"/><path d="M27.5 31 V4" stroke="#333" stroke-width="1.3"/><path d="M25 7 L27.5 1.5 L30 7Z" fill="#333"/></g><g transform="translate(218,62) scale(1.0)"><path d="M3 7 Q16 -1 29 7" stroke="#444" stroke-width="1.3" fill="none"/><path d="M1 8 L6 4.5 L6.5 9.5Z" fill="#444"/><path d="M1 17 Q15 8 27 16 L27 23 Q15 16 3 25Z" fill="#93c9f2"/><path d="M1 17 L3 25 Q15 17 27 23 L28 26 Q15 20 3 28 Z" fill="#5aa5e4"/><path d="M1 17 V21 L3 28 V25Z" fill="#3b88cf"/><path d="M26 15 L32 11 V22 L27 26Z" fill="#fff" stroke="#444" stroke-width="1"/></g><g transform="translate(262,60) scale(1.0)"><path d="M1 6 L6 1 H31 L26 6Z" fill="#f4f4f4" stroke="#555" stroke-width="1"/><rect x="1" y="6" width="25" height="25" fill="#e6e6e6" stroke="#555" stroke-width="1"/><path d="M26 6 L31 1 V26 L26 31Z" fill="#c6c6c6" stroke="#555" stroke-width="1"/><circle cx="13.5" cy="18.5" r="8.5" fill="#fff" stroke="#555" stroke-width="1"/><path d="M13.5 11.5 A7 7 0 1 1 6.5 18.5 A6 6 0 0 0 13.5 11.5Z" fill="#5aa5e4"/><circle cx="13.5" cy="18.5" r="7" fill="none" stroke="#777" stroke-width="0.8"/></g><g transform="translate(305,62) scale(1.0)"><path d="M7 3.5 H22 M3.5 7 V21 M7 24.5 H22" stroke="#444" stroke-width="1.2"/><rect x="0.5" y="0.5" width="6" height="6" fill="#fff" stroke="#444"/><rect x="22" y="0" width="7" height="7" fill="#5aa5e4"/><rect x="0" y="21" width="7" height="7" fill="#5aa5e4"/><rect x="22" y="21" width="7" height="7" fill="#5aa5e4"/></g><g transform="translate(348,61) scale(1.0)"><path d="M2 10 Q2 5 7 5 H22 Q27 5 27 10 V25 Q27 30 22 30 H7 Q2 30 2 25Z" fill="#a57ddb" stroke="#7d55b8" stroke-width="1"/><path d="M5 9 H24 V27 H5Z" fill="#b896ea"/><path d="M14.5 9 V27 M5 18 H24" stroke="#6b45a6" stroke-width="1.2"/><path d="M27 11 Q31 12 30 18 V25 L27 27" fill="#8a62c4"/><path d="M24 1 L25.6 5 L29.5 3.5 L28 7.3 L32 9 L28 10.7 L29.5 14.5 L25.6 13 L24 17 L22.4 13 L18.5 14.5 L20 10.7 L16 9 L20 7.3 L18.5 3.5 L22.4 5Z" fill="#f6a21c"/></g><g transform="translate(403,60) scale(1.0)"><path d="M1 5 Q1 1 5 1 H8 V31 H1Z" fill="#e4e4e4" stroke="#555" stroke-width="1"/><path d="M8 5 L12 1 H20 L16 5Z" fill="#93c9f2"/><rect x="8" y="5" width="8" height="26" fill="#5aa5e4"/><path d="M16 5 L20 1 V27 L16 31Z" fill="#3b88cf"/><path d="M16 16 H27" stroke="#222" stroke-width="1.4"/><path d="M26 13 L30 16 L26 19Z" fill="#222"/></g><g transform="translate(445,60) scale(1.0)"><path d="M1 31 V10 Q1 4 7 1 H16 Q26 3 31 12 V27 L26 31Z" fill="#dedede" stroke="#555" stroke-width="1"/><path d="M12 1 Q26 2 31 13 L28 17 Q24 7 12 5Z" fill="#5aa5e4"/><path d="M26 31 V20 L31 15 V27Z" fill="#c4c4c4"/></g><g transform="translate(488,60) scale(1.0)"><path d="M1 6 L6 1 H31 L26 6Z" fill="#f2f2f2" stroke="#555" stroke-width="1"/><rect x="1" y="6" width="25" height="25" fill="#e6e6e6" stroke="#555" stroke-width="1"/><path d="M26 6 L31 1 V26 L26 31Z" fill="#c4c4c4" stroke="#555" stroke-width="1"/><rect x="5" y="10" width="17" height="17" fill="#fff" stroke="#555" stroke-width="0.8"/><path d="M6 11 H10 V22 H21 V26 H6Z" fill="#3b88cf"/><path d="M10 22 L13 19 H21 V22Z" fill="#93c9f2"/></g><g transform="translate(531,60) scale(1.0)"><path d="M9 5 L13 1 H32 L28 5Z" fill="#93c9f2"/><rect x="9" y="5" width="19" height="16" fill="#5aa5e4"/><path d="M28 5 L32 1 V17 L28 21Z" fill="#3b88cf"/><path d="M0 16 L4 12 H9 V16Z" fill="#93c9f2"/><rect x="0" y="16" width="18" height="16" fill="#5aa5e4"/><path d="M18 21 H28 L22 27 V32 H18Z" fill="#3b88cf"/></g><g transform="translate(573,60) scale(1.0)"><path d="M3 5 L7 1 H31 L27 5Z" fill="#93c9f2"/><rect x="3" y="5" width="24" height="13" fill="#5aa5e4"/><path d="M27 5 L31 1 V14 L27 18Z" fill="#3b88cf"/><path d="M0 21 H26 L32 15" stroke="#5aa5e4" stroke-width="2" fill="none"/><rect x="3" y="23" width="24" height="9" fill="#e0e0e0" stroke="#666" stroke-width="0.8"/><path d="M27 23 L31 19 V28 L27 32Z" fill="#c4c4c4"/></g><g transform="translate(617,60) scale(1.0)"><path d="M16 4 V28 M4 16 H28" stroke="#222" stroke-width="2.4"/><path d="M16 0 L21 7 H11Z M16 32 L21 25 H11Z M0 16 L7 11 V21Z M32 16 L25 11 V21Z" fill="#222"/></g><g transform="translate(672,61) scale(1.0)"><rect x="1" y="17" width="14" height="14" fill="#e2e2e2" stroke="#555" stroke-width="0.8"/><rect x="15" y="17" width="14" height="14" fill="#e2e2e2" stroke="#555" stroke-width="0.8"/><path d="M15 17 L19 13 H33 L29 17Z" fill="#f2f2f2" stroke="#555" stroke-width="0.8"/><path d="M29 17 L33 13 V27 L29 31Z" fill="#c6c6c6" stroke="#555" stroke-width="0.8"/><path d="M1 7 L5 3 H17 L13 7Z" fill="#93c9f2"/><rect x="1" y="7" width="14" height="11" fill="#5aa5e4"/><path d="M15 7 L18 4 V15 L15 18Z" fill="#3b88cf"/><path d="M25 0 L26.5 4 L30.5 2.5 L29 6.3 L33 8 L29 9.7 L30.5 13.5 L26.5 12 L25 16 L23.5 12 L19.5 13.5 L21 9.7 L17 8 L21 6.3 L19.5 2.5 L23.5 4Z" fill="#f6a21c"/></g><g transform="translate(718,61) scale(1.0)"><path d="M2 8 Q2 2 7 1 L11 4 V26 L4 30 Q1 26 2 22Z" fill="#d4d4d4" stroke="#555" stroke-width="1"/><path d="M17 9 L25 3 Q29 8 29 14 V28 L24 31 L17 25Z" fill="#d4d4d4" stroke="#555" stroke-width="1"/><path d="M8 14 V21 M22 9 V16" stroke="#3b88cf" stroke-width="1.2"/></g><g transform="translate(805,60) scale(1.0)"><path d="M1 9 L7 2 H11 V25 L4 31 H1Z" fill="#e6e6e6" stroke="#555" stroke-width="1"/><path d="M11 7 L19 2 V25 L11 31Z" fill="#5ab87a"/><path d="M23 10 L30 4 V26 L23 32Z" fill="#ea9a5e"/></g><g transform="translate(906,68) scale(1.0)"><path d="M2 0 V8 M27 0 V8 M2 4 H27" stroke="#555" stroke-width="1.2"/><path d="M2 4 L6 1.5 V6.5Z M27 4 L23 1.5 V6.5Z" fill="#555"/><rect x="1" y="11" width="28" height="6" fill="#f7b500"/><path d="M4 11 V13 M7 11 V13 M10 11 V14 M13 11 V13 M16 11 V13 M19 11 V14 M22 11 V13 M25 11 V13" stroke="#b07800" stroke-width="0.8"/></g><g transform="translate(989,61) scale(1.0)"><rect x="0" y="0" width="30" height="29" fill="#2f86cf"/><rect x="1.5" y="1.5" width="27" height="26" fill="#7cc4f2"/><circle cx="22" cy="7.5" r="3.3" fill="#eef6fb"/><path d="M1.5 27.5 V18 Q7 10 12 15 Q16 19 19 17 Q24 14 28.5 20 V27.5Z" fill="#3e8fd1"/></g><g transform="translate(1071,60) scale(1.0)"><rect x="1" y="1" width="27" height="22" fill="none" stroke="#3aa46a" stroke-width="1.2" stroke-dasharray="3 2"/><path d="M21 18 V32 L24.5 28.5 L27 33 L29 32 L26.8 27.5 L31 27.5Z" fill="#fff" stroke="#222" stroke-width="1" stroke-linejoin="round"/></g><path d="M83 72 H89 L86 75.5Z" fill="#333"/></svg>
<!-- browser -->
<div class="a panel" style="left:0;top:119px;width:300px;height:25px"></div>
<div class="t" style="left:25px;top:126px;font-size:12px;color:#555">BROWSER</div>

<!-- browser tree -->
<div class="a" style="left:59px;top:148px;width:180px;height:22px;background:rgba(242,242,242,0.8)"></div>
<div class="a" style="left:61px;top:151px;width:154px;height:16px;background:#8e8e8e"></div>
<div class="t" style="left:94px;top:153px;font-size:12px;font-weight:bold;color:#fff">biçim malzeme 2 v1</div>
<div class="row" style="left:81px;top:173px;width:118px"></div>
<div class="t lbl" style="left:87px;top:178px">Document Settings</div>
<div class="row" style="left:81px;top:197px;width:90px"></div>
<div class="t lbl" style="left:87px;top:202px">Named Views</div>
<div class="row" style="left:55px;top:221px;width:97px"></div>
<div class="t lbl" style="left:112px;top:226px">Origin</div>
<div class="row" style="left:55px;top:245px;width:105px"></div>
<div class="t lbl" style="left:112px;top:250px">Bodies</div>
<div class="row" style="left:55px;top:269px;width:115px"></div>
<div class="t lbl" style="left:112px;top:274px">Sketches</div>

<!-- edit feature panel -->
<div class="a panel" style="left:1260px;top:240px;width:250px;height:351px"></div>
<div class="a" style="left:1261px;top:263px;width:248px;height:1px;background:#cfcfcf"></div>
<div class="t" style="left:1285px;top:246px;font-size:12.2px;color:#555">EDIT FEATURE</div>
<div class="t lbl" style="left:1273px;top:274px">Type</div>
<div class="t lbl" style="left:1273px;top:305px">Profiles</div>
<div class="t lbl" style="left:1273px;top:336px">Start</div>
<div class="t lbl" style="left:1273px;top:367px">Direction</div>
<div class="t lbl" style="left:1273px;top:398px">Extent Type</div>
<div class="t lbl" style="left:1273px;top:429px">Distance</div>
<div class="t lbl" style="left:1273px;top:460px">Taper Angle</div>
<div class="t lbl" style="left:1273px;top:501px">Operation</div>
<div class="a" style="left:1352px;top:266px;width:24px;height:27px;background:#1b8ad3;border-radius:2px"></div>
<div class="a" style="left:1352px;top:297px;width:84px;height:27px;background:#1b8ad3;border-radius:2px"></div>
<div class="t" style="left:1374px;top:304px;font-size:12.5px;color:#fff">2 selected</div>
<div class="dd" style="top:328px"><div class="ddt">Profile Plane</div><div class="arr"></div></div>
<div class="dd" style="top:359px"><div class="ddt">One Side</div><div class="arr"></div></div>
<div class="dd" style="top:390px"><div class="ddt">Distance</div><div class="arr"></div></div>
<div class="inp" style="top:421px"><div class="inpt">-2.00 mm</div></div>
<div class="inp" style="top:452px"><div class="inpt">0.0 deg</div></div>
<div class="a" style="left:1262px;top:485px;width:234px;height:3px;background:#cacaca"></div>
<div class="dd" style="top:493px"><div class="ddt">Cut</div><div class="arr"></div></div>
<div class="t" style="left:1285px;top:531px;font-size:12px;font-weight:bold;color:#3a3a3a">Objects To Cut</div>
<div class="a" style="left:1261px;top:554px;width:248px;height:1px;background:#cfcfcf"></div>
<div class="a" style="left:1368px;top:563px;width:60px;height:20px;background:#ebebeb;border:1px solid #c8c8c8"></div>
<div class="t" style="left:1387px;top:567px;font-size:13px;color:#8a8a8a">OK</div>
<div class="a" style="left:1438px;top:563px;width:60px;height:20px;background:#ebebeb;border:1px solid #c8c8c8"></div>
<div class="t" style="left:1447px;top:567px;font-size:13px;color:#555">Cancel</div>

<!-- comments -->
<div class="a panel" style="left:0;top:934px;width:300px;height:25px"></div>
<div class="t" style="left:25px;top:941px;font-size:12px;color:#555">COMMENTS</div>

<!-- timeline -->
<div id="timeline" class="a"></div>

<!-- snip hint -->
<div class="a" style="left:1216px;top:701px;width:265px;height:22px;background:rgba(205,228,247,0.42)"></div>
<div class="t" style="left:1249px;top:706px;font-size:13px;color:rgba(140,140,150,0.38)">Dikdörtgen Biçimli Ekran Alıntısı</div>
<!-- watermark -->
<div class="t" style="left:1117px;top:917px;font-size:21px;letter-spacing:0.25px;color:rgba(125,125,125,0.5)">Windows'u Etkinleştir</div>
<div class="t" style="left:1117px;top:944px;font-size:15.7px;letter-spacing:0px;color:rgba(125,125,125,0.48)">Windows'u etkinleştirmek için Ayarlar'a gidin.</div>
<svg class="a" style="left:0;top:0" width="1514" height="1011" viewBox="0 0 1514 1011"><path d="M10 128 L5 131.5 L10 135Z M15 128 L10 131.5 L15 135Z" fill="#444"/><circle cx="283.5" cy="131.5" r="4.6" fill="#222"/><rect x="281" y="130.7" width="5" height="1.6" fill="#fff"/><path d="M295.5 126 V137 M297.5 126 V137" stroke="#999" stroke-width="0.8"/><path d="M28 153 V164 H17Z" fill="#666" stroke="#333" stroke-width="1"/><path d="M39 158.5 Q47 151.5 55 158.5 Q47 165.5 39 158.5Z" fill="#8a8a8a"/><circle cx="47" cy="158.5" r="2.6" fill="#f0f0f0"/><circle cx="47" cy="158.5" r="1.6" fill="#8a8a8a"/><path d="M65 155 L68 152 H80 V163 L77 166 H65Z" fill="#e8e8e8" stroke="#444" stroke-width="0.9"/><path d="M65 155 H77 V166 M77 155 L80 152" fill="none" stroke="#444" stroke-width="0.9"/><circle cx="225.5" cy="159.5" r="6" fill="none" stroke="#333" stroke-width="1.3"/><circle cx="225.5" cy="159.5" r="2.6" fill="#222"/><path d="M36.5 176 L44.5 183 L36.5 190Z" fill="#fafafa" stroke="#333" stroke-width="1.2" stroke-linejoin="round"/><path d="M36.5 200 L44.5 207 L36.5 214Z" fill="#fafafa" stroke="#333" stroke-width="1.2" stroke-linejoin="round"/><path d="M36.5 224 L44.5 231 L36.5 238Z" fill="#fafafa" stroke="#333" stroke-width="1.2" stroke-linejoin="round"/><path d="M36.5 248 L44.5 255 L36.5 262Z" fill="#fafafa" stroke="#333" stroke-width="1.2" stroke-linejoin="round"/><path d="M36.5 272 L44.5 279 L36.5 286Z" fill="#fafafa" stroke="#333" stroke-width="1.2" stroke-linejoin="round"/><path d="M72.8 184.6 L70.1 186.5 L69.4 189.7 L66.2 189.1 L63.4 190.8 L61.5 188.1 L58.3 187.4 L58.9 184.2 L57.2 181.4 L59.9 179.5 L60.6 176.3 L63.8 176.9 L66.6 175.2 L68.5 177.9 L71.7 178.6 L71.1 181.8Z" fill="#8c8c8c"/><circle cx="65" cy="183" r="2.8" fill="#f0f0f0"/><path d="M57 201 H62 L63.5 202.5 H73 V214 H57Z" fill="#9a9a9a"/><rect x="57" y="204" width="16" height="10" fill="#8e8e8e"/><path d="M57 231 Q65 224 73 231 Q65 238 57 231Z" fill="none" stroke="#b0b0b0" stroke-width="1.2"/><circle cx="65" cy="231" r="2.3" fill="none" stroke="#b0b0b0" stroke-width="1.1"/><path d="M59 225 L71 237" stroke="#b0b0b0" stroke-width="1.2"/><path d="M82 225 H87 L88.5 226.5 H98 V238 H82Z" fill="#9a9a9a"/><rect x="82" y="228" width="16" height="10" fill="#8e8e8e"/><path d="M57 255 Q65 248 73 255 Q65 262 57 255Z" fill="#8a8a8a"/><circle cx="65" cy="255" r="2.6" fill="#f0f0f0"/><circle cx="65" cy="255" r="1.6" fill="#8a8a8a"/><path d="M82 249 H87 L88.5 250.5 H98 V262 H82Z" fill="#9a9a9a"/><rect x="82" y="252" width="16" height="10" fill="#8e8e8e"/><path d="M57 279 Q65 272 73 279 Q65 286 57 279Z" fill="#8a8a8a"/><circle cx="65" cy="279" r="2.6" fill="#f0f0f0"/><circle cx="65" cy="279" r="1.6" fill="#8a8a8a"/><path d="M82 273 H87 L88.5 274.5 H98 V286 H82Z" fill="#9a9a9a"/><rect x="82" y="276" width="16" height="10" fill="#8e8e8e"/><path d="M1263.5 246 V257 M1265.5 246 V257" stroke="#888" stroke-width="0.8"/><circle cx="1276.5" cy="251.5" r="4.6" fill="#333"/><rect x="1274" y="250.7" width="5" height="1.6" fill="#fff"/><path d="M1495 248 L1500 251.5 L1495 255Z M1500 248 L1505 251.5 L1500 255Z" fill="#222"/><g transform="translate(1355,270) scale(1.0)"><path d="M1 4 L4 1 H12 L9 4Z" fill="#cfe6f8"/><rect x="1" y="4" width="9" height="12" fill="#a9d3f5"/><path d="M9 4 L12 1 V13 L9 16Z" fill="#7cb8ea"/><path d="M1 16 H9 L12 13 V16 L9 19 H1Z" fill="#e8f3fb"/><path d="M16 18 V2 M14 5 L16 1 L18 5" stroke="#fff" stroke-width="1.2" fill="none"/></g><g transform="translate(1385,270) scale(1.0)"><path d="M1 5 Q3 2 6 2 H13 L10 5 V17 Q7 15 4 17 L1 19Z" fill="#5aa5e4"/><path d="M10 5 L13 2 V14 L10 17Z" fill="#3b88cf"/><path d="M16 18 V2 M14 5 L16 1 L18 5" stroke="#333" stroke-width="1.2" fill="none"/></g><path d="M1361 303 V316 L1364 313 L1366.5 318 L1368 317 L1366 312.5 L1369.5 312.5Z" fill="#f4f4f4" stroke="#333" stroke-width="0.8"/><path d="M1448 306 L1456 314 M1456 306 L1448 314" stroke="#555" stroke-width="2"/><path d="M1359.5 333 V350 M1360 341.5 H1369" stroke="#1b2b4b" stroke-width="1.6"/><path d="M1367 338.5 L1371 341.5 L1367 344.5Z" fill="#1b2b4b"/><path d="M1359 380 L1368 370" stroke="#666" stroke-width="1.2"/><path d="M1357.5 381.5 L1358.5 377 L1362 380.5Z" fill="#666"/><path d="M1363 364 L1371 366 L1368 372 L1364 371Z" fill="#e8a070"/><path d="M1363 364 V371" stroke="#c07040" stroke-width="1"/><path d="M1356.5 395 V410 M1371.5 395 V410" stroke="#1b2b4b" stroke-width="1.6"/><path d="M1359 402.5 H1369" stroke="#1b2b4b" stroke-width="1.1"/><path d="M1358 402.5 L1361 400 V405Z M1370 402.5 L1367 400 V405Z" fill="#1b2b4b"/><rect x="1362" y="498" width="6" height="9" fill="#ef9aa6"/><path d="M1357 505 V514 H1371 V505 H1368.5 V511 H1359.5 V505Z" fill="#3c92cf"/><path d="M1270.5 533 L1276.5 537.5 L1270.5 542Z" fill="#222"/><circle cx="1275" cy="573" r="6.2" fill="#111"/><rect x="1274" y="571.5" width="2" height="5.5" fill="#fff"/><circle cx="1275" cy="569.2" r="1.1" fill="#fff"/><rect x="1076" y="649" width="99" height="22" fill="rgba(238,238,238,0.85)"/><path d="M1077.5 651 V669 M1079.5 651 V669" stroke="#b0b0b0" stroke-width="0.8"/><rect x="1081.5" y="650.5" width="76" height="20" fill="#fff" stroke="#bdbdbd" stroke-width="1"/><rect x="1092" y="653" width="54" height="15" fill="#0a6fd0"/><text x="1092" y="665.5" font-family="Liberation Sans" font-size="13" fill="#fff">-2.00 mm</text><circle cx="1170" cy="654.5" r="1.4" fill="#777"/><circle cx="1170" cy="659.5" r="1.4" fill="#777"/><circle cx="1170" cy="664.5" r="1.4" fill="#777"/><rect x="637.5" y="935.5" width="236" height="23.5" fill="rgba(242,242,242,0.88)"/><g transform="translate(639,938) scale(1.0)"><path d="M8 1 V17 M5 4 L8 0 L11 4" stroke="#222" stroke-width="1.3" fill="none"/><path d="M2 10 Q-2 14 6 15 M10 15 Q16 14 14 10" stroke="#222" stroke-width="1.3" fill="none"/><path d="M1 14 L4 11 L4.5 16Z" fill="#222"/></g><path d="M661 946 H666 L663.5 949Z" fill="#222"/><g transform="translate(672,939) scale(1.0)"><rect x="0.5" y="4.5" width="15" height="12" fill="#f4f4f4" stroke="#333" stroke-width="1"/><rect x="3" y="9" width="10" height="4" fill="#9aa7b6" stroke="#333" stroke-width="0.6"/><path d="M2 4 L6 1 L9 3 L13 0 V4" fill="#666"/></g><g transform="translate(698,938) scale(1.0)"><path d="M4 17 Q1 12 1 9 L3 8 L5 11 V3 Q5 1.5 6.3 1.5 Q7.5 1.5 7.5 3 V1.8 Q7.5 0.5 8.8 0.5 Q10 0.5 10 1.8 V2.5 Q10 1.3 11.3 1.3 Q12.5 1.3 12.5 2.5 V4 Q12.5 2.8 13.8 2.8 Q15 2.8 15 4 V11 Q15 15 13 17Z" fill="#f8f8f8" stroke="#222" stroke-width="1.1"/></g><g transform="translate(724,939) scale(1.0)"><circle cx="6.5" cy="7.5" r="5.5" fill="#eef4f4" stroke="#222" stroke-width="1.4"/><path d="M10.5 11.5 L15 16" stroke="#222" stroke-width="2.4"/><path d="M14 1 V6 M11.5 3.5 H16.5 M11.5 8.5 H16.5" stroke="#222" stroke-width="1"/></g><g transform="translate(750,939) scale(1.0)"><rect x="0.5" y="0.5" width="15" height="15" fill="none" stroke="#333" stroke-width="0.9" stroke-dasharray="1.5 1.5"/><circle cx="7" cy="7" r="5.5" fill="#e6f0f0" stroke="#222" stroke-width="1.4"/><path d="M11 11 L15.5 15.5" stroke="#222" stroke-width="2.4"/></g><path d="M771 946 H776 L773.5 949Z" fill="#222"/><g transform="translate(783,939) scale(1.0)"><rect x="0.5" y="0.5" width="15" height="11" fill="#8fb3de" stroke="#333" stroke-width="1"/><path d="M6 12 V15 H4 M10 12 V15 H12 M4 15.5 H12" stroke="#333" stroke-width="1"/></g><path d="M803 946 H808 L805.5 949Z" fill="#222"/><g transform="translate(814,939) scale(1.0)"><rect x="0.5" y="0.5" width="15" height="16" fill="#9a9a9a" stroke="#555" stroke-width="1"/><path d="M4 1 V16" stroke="#eee" stroke-width="0.7"/><path d="M7 1 V16" stroke="#eee" stroke-width="0.7"/><path d="M10 1 V16" stroke="#eee" stroke-width="0.7"/><path d="M13 1 V16" stroke="#eee" stroke-width="0.7"/><path d="M1 4 H15" stroke="#eee" stroke-width="0.7"/><path d="M1 7 H15" stroke="#eee" stroke-width="0.7"/><path d="M1 10 H15" stroke="#eee" stroke-width="0.7"/><path d="M1 13 H15" stroke="#eee" stroke-width="0.7"/></g><path d="M833 946 H838 L835.5 949Z" fill="#222"/><g transform="translate(844,939) scale(1.0)"><rect x="0.5" y="0.5" width="16" height="15" fill="#3a5a8a"/><rect x="2" y="2" width="5.8" height="5.3" fill="#9cc0ea"/><rect x="9.2" y="2" width="5.8" height="5.3" fill="#9cc0ea"/><rect x="2" y="8.7" width="5.8" height="5.3" fill="#9cc0ea"/><rect x="9.2" y="8.7" width="5.8" height="5.3" fill="#9cc0ea"/></g><path d="M865 946 H870 L867.5 949Z" fill="#222"/><path d="M8 980 V995 M19 981 L10 987.5 L19 994Z" stroke="#444" stroke-width="2" fill="#444"/><path d="M42 981 L33 987.5 L42 994Z" fill="#444"/><rect x="42.5" y="984" width="2" height="7" fill="#444"/><path d="M57 980 L69 987.5 L57 995Z" fill="#444"/><rect x="81" y="984" width="2" height="7" fill="#444"/><path d="M84 981 L93 987.5 L84 994Z" fill="#444"/><path d="M108 981 L117 987.5 L108 994Z M118.5 980 V995" stroke="#444" stroke-width="2" fill="#444"/><path d="M151 1004.5 H1062" stroke="#bdbdbd" stroke-width="2"/><g opacity="1.0" transform="translate(140,978)"><rect x="1" y="1" width="16" height="15" fill="none" stroke="#3b88cf" stroke-width="0.9" stroke-dasharray="2 1.5"/><path d="M11 17 L17 11 L19 13 L13 19Z" fill="#f2a23c"/></g><path d="M150.5 1000 V1004" stroke="#bdbdbd" stroke-width="1"/><g opacity="1.0" transform="translate(164,978)"><path d="M1 4 L4 1 H13 L10 4Z" fill="#93c9f2"/><rect x="1" y="4" width="9" height="12" fill="#5aa5e4"/><path d="M10 4 L13 1 V13 L10 16Z" fill="#3b88cf"/><path d="M1 16 H10 L13 13 V15 L10 18 H1Z" fill="#cfcfcf"/><path d="M17 17 V2 M15 5 L17 1 L19 5" stroke="#333" stroke-width="1.2" fill="none"/></g><path d="M174.5 1000 V1004" stroke="#bdbdbd" stroke-width="1"/><g opacity="1.0" transform="translate(188,978)"><path d="M1 18 V7 Q1 2 6 1 H9 Q16 2 18 9 V14 L14 18Z" fill="#dcdcdc" stroke="#555" stroke-width="1"/><path d="M8 1 Q16 2 18 10 L16 11 Q14 5 8 4Z" fill="#5aa5e4"/></g><path d="M198.5 1000 V1004" stroke="#bdbdbd" stroke-width="1"/><g opacity="1.0" transform="translate(212,978)"><rect x="1" y="1" width="16" height="15" fill="none" stroke="#3b88cf" stroke-width="0.9" stroke-dasharray="2 1.5"/><path d="M11 17 L17 11 L19 13 L13 19Z" fill="#f2a23c"/></g><path d="M222.5 1000 V1004" stroke="#bdbdbd" stroke-width="1"/><g opacity="1.0" transform="translate(236,978)"><path d="M1 4 L4 1 H13 L10 4Z" fill="#93c9f2"/><rect x="1" y="4" width="9" height="12" fill="#5aa5e4"/><path d="M10 4 L13 1 V13 L10 16Z" fill="#3b88cf"/><path d="M1 16 H10 L13 13 V15 L10 18 H1Z" fill="#cfcfcf"/><path d="M17 17 V2 M15 5 L17 1 L19 5" stroke="#333" stroke-width="1.2" fill="none"/></g><path d="M246.5 1000 V1004" stroke="#bdbdbd" stroke-width="1"/><g opacity="1.0" transform="translate(260,978)"><path d="M1 18 V7 Q1 2 6 1 H9 Q16 2 18 9 V14 L14 18Z" fill="#dcdcdc" stroke="#555" stroke-width="1"/><path d="M8 1 Q16 2 18 10 L16 11 Q14 5 8 4Z" fill="#5aa5e4"/></g><path d="M270.5 1000 V1004" stroke="#bdbdbd" stroke-width="1"/><g opacity="1.0" transform="translate(284,978)"><rect x="1" y="1" width="16" height="15" fill="none" stroke="#3b88cf" stroke-width="0.9" stroke-dasharray="2 1.5"/><path d="M11 17 L17 11 L19 13 L13 19Z" fill="#f2a23c"/></g><path d="M294.5 1000 V1004" stroke="#bdbdbd" stroke-width="1"/><g opacity="1.0" transform="translate(308,978)"><path d="M1 4 L4 1 H13 L10 4Z" fill="#93c9f2"/><rect x="1" y="4" width="9" height="12" fill="#5aa5e4"/><path d="M10 4 L13 1 V13 L10 16Z" fill="#3b88cf"/><path d="M1 16 H10 L13 13 V15 L10 18 H1Z" fill="#cfcfcf"/><path d="M17 17 V2 M15 5 L17 1 L19 5" stroke="#333" stroke-width="1.2" fill="none"/></g><path d="M318.5 1000 V1004" stroke="#bdbdbd" stroke-width="1"/><g opacity="1.0" transform="translate(332,978)"><path d="M1 4 L4 1 H13 L10 4Z" fill="#93c9f2"/><rect x="1" y="4" width="9" height="12" fill="#5aa5e4"/><path d="M10 4 L13 1 V13 L10 16Z" fill="#3b88cf"/><path d="M1 16 H10 L13 13 V15 L10 18 H1Z" fill="#cfcfcf"/><path d="M17 17 V2 M15 5 L17 1 L19 5" stroke="#333" stroke-width="1.2" fill="none"/></g><path d="M342.5 1000 V1004" stroke="#bdbdbd" stroke-width="1"/><g opacity="1.0" transform="translate(356,978)"><path d="M1 4 L4 1 H13 L10 4Z" fill="#93c9f2"/><rect x="1" y="4" width="9" height="12" fill="#5aa5e4"/><path d="M10 4 L13 1 V13 L10 16Z" fill="#3b88cf"/><path d="M1 16 H10 L13 13 V15 L10 18 H1Z" fill="#cfcfcf"/><path d="M17 17 V2 M15 5 L17 1 L19 5" stroke="#333" stroke-width="1.2" fill="none"/></g><path d="M366.5 1000 V1004" stroke="#bdbdbd" stroke-width="1"/><g opacity="1.0" transform="translate(380,978)"><path d="M1 18 V7 Q1 2 6 1 H9 Q16 2 18 9 V14 L14 18Z" fill="#dcdcdc" stroke="#555" stroke-width="1"/><path d="M8 1 Q16 2 18 10 L16 11 Q14 5 8 4Z" fill="#5aa5e4"/></g><path d="M390.5 1000 V1004" stroke="#bdbdbd" stroke-width="1"/><g opacity="1.0" transform="translate(404,978)"><path d="M1 4 L4 1 H13 L10 4Z" fill="#93c9f2"/><rect x="1" y="4" width="9" height="12" fill="#5aa5e4"/><path d="M10 4 L13 1 V13 L10 16Z" fill="#3b88cf"/><path d="M1 16 H10 L13 13 V15 L10 18 H1Z" fill="#cfcfcf"/><path d="M17 17 V2 M15 5 L17 1 L19 5" stroke="#333" stroke-width="1.2" fill="none"/></g><path d="M414.5 1000 V1004" stroke="#bdbdbd" stroke-width="1"/><g opacity="1.0" transform="translate(428,978)"><path d="M1 18 V7 Q1 2 6 1 H9 Q16 2 18 9 V14 L14 18Z" fill="#dcdcdc" stroke="#555" stroke-width="1"/><path d="M8 1 Q16 2 18 10 L16 11 Q14 5 8 4Z" fill="#5aa5e4"/></g><path d="M438.5 1000 V1004" stroke="#bdbdbd" stroke-width="1"/><g opacity="1.0" transform="translate(452,978)"><rect x="1" y="1" width="16" height="15" fill="none" stroke="#3b88cf" stroke-width="0.9" stroke-dasharray="2 1.5"/><path d="M11 17 L17 11 L19 13 L13 19Z" fill="#f2a23c"/></g><path d="M462.5 1000 V1004" stroke="#bdbdbd" stroke-width="1"/><g opacity="1.0" transform="translate(476,978)"><path d="M1 4 L4 1 H13 L10 4Z" fill="#93c9f2"/><rect x="1" y="4" width="9" height="12" fill="#5aa5e4"/><path d="M10 4 L13 1 V13 L10 16Z" fill="#3b88cf"/><path d="M1 16 H10 L13 13 V15 L10 18 H1Z" fill="#cfcfcf"/><path d="M17 17 V2 M15 5 L17 1 L19 5" stroke="#333" stroke-width="1.2" fill="none"/></g><path d="M486.5 1000 V1004" stroke="#bdbdbd" stroke-width="1"/><g opacity="1.0" transform="translate(500,978)"><path d="M1 4 L4 1 H13 L10 4Z" fill="#93c9f2"/><rect x="1" y="4" width="9" height="12" fill="#5aa5e4"/><path d="M10 4 L13 1 V13 L10 16Z" fill="#3b88cf"/><path d="M1 16 H10 L13 13 V15 L10 18 H1Z" fill="#cfcfcf"/><path d="M17 17 V2 M15 5 L17 1 L19 5" stroke="#333" stroke-width="1.2" fill="none"/></g><path d="M510.5 1000 V1004" stroke="#bdbdbd" stroke-width="1"/><g opacity="0.35" transform="translate(524,978)"><path d="M1 18 V7 Q1 2 6 1 H9 Q16 2 18 9 V14 L14 18Z" fill="#dcdcdc" stroke="#555" stroke-width="1"/><path d="M8 1 Q16 2 18 10 L16 11 Q14 5 8 4Z" fill="#5aa5e4"/></g><path d="M534.5 1000 V1004" stroke="#d0d0d0" stroke-width="1"/><g opacity="0.35" transform="translate(548,978)"><path d="M9 2 V17 M2 9.5 H16" stroke="#777" stroke-width="1.3"/><path d="M9 0 L12 4 H6Z M9 19 L12 15 H6Z M0 9.5 L4 6.5 V12.5Z M18 9.5 L14 6.5 V12.5Z" fill="#777"/></g><path d="M558.5 1000 V1004" stroke="#d0d0d0" stroke-width="1"/><g opacity="0.35" transform="translate(572,978)"><rect x="6" y="2" width="11" height="10" fill="#5aa5e4"/><rect x="1" y="8" width="11" height="10" fill="#3b88cf"/></g><path d="M582.5 1000 V1004" stroke="#d0d0d0" stroke-width="1"/><g opacity="0.35" transform="translate(596,978)"><path d="M9 2 V17 M2 9.5 H16" stroke="#777" stroke-width="1.3"/><path d="M9 0 L12 4 H6Z M9 19 L12 15 H6Z M0 9.5 L4 6.5 V12.5Z M18 9.5 L14 6.5 V12.5Z" fill="#777"/></g><path d="M606.5 1000 V1004" stroke="#d0d0d0" stroke-width="1"/><g opacity="0.35" transform="translate(620,978)"><path d="M9 2 V17 M2 9.5 H16" stroke="#777" stroke-width="1.3"/><path d="M9 0 L12 4 H6Z M9 19 L12 15 H6Z M0 9.5 L4 6.5 V12.5Z M18 9.5 L14 6.5 V12.5Z" fill="#777"/></g><path d="M630.5 1000 V1004" stroke="#d0d0d0" stroke-width="1"/><g opacity="0.35" transform="translate(644,978)"><rect x="1" y="1" width="16" height="15" fill="none" stroke="#3b88cf" stroke-width="0.9" stroke-dasharray="2 1.5"/><path d="M11 17 L17 11 L19 13 L13 19Z" fill="#f2a23c"/></g><path d="M654.5 1000 V1004" stroke="#d0d0d0" stroke-width="1"/><g opacity="0.35" transform="translate(668,978)"><rect x="1" y="1" width="16" height="15" fill="none" stroke="#3b88cf" stroke-width="0.9" stroke-dasharray="2 1.5"/><path d="M11 17 L17 11 L19 13 L13 19Z" fill="#f2a23c"/></g><path d="M678.5 1000 V1004" stroke="#d0d0d0" stroke-width="1"/><g opacity="0.35" transform="translate(692,978)"><path d="M1 4 L4 1 H13 L10 4Z" fill="#93c9f2"/><rect x="1" y="4" width="9" height="12" fill="#5aa5e4"/><path d="M10 4 L13 1 V13 L10 16Z" fill="#3b88cf"/><path d="M1 16 H10 L13 13 V15 L10 18 H1Z" fill="#cfcfcf"/><path d="M17 17 V2 M15 5 L17 1 L19 5" stroke="#333" stroke-width="1.2" fill="none"/></g><path d="M702.5 1000 V1004" stroke="#d0d0d0" stroke-width="1"/><g opacity="0.35" transform="translate(716,978)"><path d="M1 4 L4 1 H13 L10 4Z" fill="#93c9f2"/><rect x="1" y="4" width="9" height="12" fill="#5aa5e4"/><path d="M10 4 L13 1 V13 L10 16Z" fill="#3b88cf"/><path d="M1 16 H10 L13 13 V15 L10 18 H1Z" fill="#cfcfcf"/><path d="M17 17 V2 M15 5 L17 1 L19 5" stroke="#333" stroke-width="1.2" fill="none"/></g><path d="M726.5 1000 V1004" stroke="#d0d0d0" stroke-width="1"/><g opacity="0.35" transform="translate(740,978)"><path d="M9 2 V17 M2 9.5 H16" stroke="#777" stroke-width="1.3"/><path d="M9 0 L12 4 H6Z M9 19 L12 15 H6Z M0 9.5 L4 6.5 V12.5Z M18 9.5 L14 6.5 V12.5Z" fill="#777"/></g><path d="M750.5 1000 V1004" stroke="#d0d0d0" stroke-width="1"/><g opacity="0.35" transform="translate(764,978)"><rect x="1" y="1" width="8" height="8" rx="2" fill="none" stroke="#777"/><rect x="8" y="9" width="9" height="9" rx="2" fill="none" stroke="#777"/></g><path d="M774.5 1000 V1004" stroke="#d0d0d0" stroke-width="1"/><g opacity="0.35" transform="translate(788,978)"><path d="M9 2 V17 M2 9.5 H16" stroke="#777" stroke-width="1.3"/><path d="M9 0 L12 4 H6Z M9 19 L12 15 H6Z M0 9.5 L4 6.5 V12.5Z M18 9.5 L14 6.5 V12.5Z" fill="#777"/></g><path d="M798.5 1000 V1004" stroke="#d0d0d0" stroke-width="1"/><g opacity="0.35" transform="translate(812,978)"><rect x="1" y="1" width="16" height="15" fill="none" stroke="#3b88cf" stroke-width="0.9" stroke-dasharray="2 1.5"/><path d="M11 17 L17 11 L19 13 L13 19Z" fill="#f2a23c"/></g><path d="M822.5 1000 V1004" stroke="#d0d0d0" stroke-width="1"/><g opacity="0.35" transform="translate(836,978)"><path d="M1 4 L4 1 H13 L10 4Z" fill="#93c9f2"/><rect x="1" y="4" width="9" height="12" fill="#5aa5e4"/><path d="M10 4 L13 1 V13 L10 16Z" fill="#3b88cf"/><path d="M1 16 H10 L13 13 V15 L10 18 H1Z" fill="#cfcfcf"/><path d="M17 17 V2 M15 5 L17 1 L19 5" stroke="#333" stroke-width="1.2" fill="none"/></g><path d="M846.5 1000 V1004" stroke="#d0d0d0" stroke-width="1"/><g opacity="0.35" transform="translate(860,978)"><path d="M1 18 V7 Q1 2 6 1 H9 Q16 2 18 9 V14 L14 18Z" fill="#dcdcdc" stroke="#555" stroke-width="1"/><path d="M8 1 Q16 2 18 10 L16 11 Q14 5 8 4Z" fill="#5aa5e4"/></g><path d="M870.5 1000 V1004" stroke="#d0d0d0" stroke-width="1"/><g opacity="0.35" transform="translate(884,978)"><path d="M9 2 V17 M2 9.5 H16" stroke="#777" stroke-width="1.3"/><path d="M9 0 L12 4 H6Z M9 19 L12 15 H6Z M0 9.5 L4 6.5 V12.5Z M18 9.5 L14 6.5 V12.5Z" fill="#777"/></g><path d="M894.5 1000 V1004" stroke="#d0d0d0" stroke-width="1"/><g opacity="0.35" transform="translate(908,978)"><path d="M9 2 V17 M2 9.5 H16" stroke="#777" stroke-width="1.3"/><path d="M9 0 L12 4 H6Z M9 19 L12 15 H6Z M0 9.5 L4 6.5 V12.5Z M18 9.5 L14 6.5 V12.5Z" fill="#777"/></g><path d="M918.5 1000 V1004" stroke="#d0d0d0" stroke-width="1"/><g opacity="0.35" transform="translate(932,978)"><path d="M1 18 V7 Q1 2 6 1 H9 Q16 2 18 9 V14 L14 18Z" fill="#dcdcdc" stroke="#555" stroke-width="1"/><path d="M8 1 Q16 2 18 10 L16 11 Q14 5 8 4Z" fill="#5aa5e4"/></g><path d="M942.5 1000 V1004" stroke="#d0d0d0" stroke-width="1"/><g opacity="0.35" transform="translate(956,978)"><path d="M1 18 V7 Q1 2 6 1 H9 Q16 2 18 9 V14 L14 18Z" fill="#dcdcdc" stroke="#555" stroke-width="1"/><path d="M8 1 Q16 2 18 10 L16 11 Q14 5 8 4Z" fill="#5aa5e4"/></g><path d="M966.5 1000 V1004" stroke="#d0d0d0" stroke-width="1"/><g opacity="0.35" transform="translate(980,978)"><rect x="1" y="1" width="16" height="15" fill="none" stroke="#3b88cf" stroke-width="0.9" stroke-dasharray="2 1.5"/><path d="M11 17 L17 11 L19 13 L13 19Z" fill="#f2a23c"/></g><path d="M990.5 1000 V1004" stroke="#d0d0d0" stroke-width="1"/><g opacity="0.35" transform="translate(1004,978)"><path d="M9 2 V17 M2 9.5 H16" stroke="#777" stroke-width="1.3"/><path d="M9 0 L12 4 H6Z M9 19 L12 15 H6Z M0 9.5 L4 6.5 V12.5Z M18 9.5 L14 6.5 V12.5Z" fill="#777"/></g><path d="M1014.5 1000 V1004" stroke="#d0d0d0" stroke-width="1"/><g opacity="0.35" transform="translate(1028,978)"><path d="M9 2 V17 M2 9.5 H16" stroke="#777" stroke-width="1.3"/><path d="M9 0 L12 4 H6Z M9 19 L12 15 H6Z M0 9.5 L4 6.5 V12.5Z M18 9.5 L14 6.5 V12.5Z" fill="#777"/></g><path d="M1038.5 1000 V1004" stroke="#d0d0d0" stroke-width="1"/><g opacity="0.35" transform="translate(1052,978)"><path d="M1 18 V7 Q1 2 6 1 H9 Q16 2 18 9 V14 L14 18Z" fill="#dcdcdc" stroke="#555" stroke-width="1"/><path d="M8 1 Q16 2 18 10 L16 11 Q14 5 8 4Z" fill="#5aa5e4"/></g><path d="M1062.5 1000 V1004" stroke="#d0d0d0" stroke-width="1"/><path d="M516 973 H528 L524 979 V1004 H520 V979Z" fill="#555"/><path d="M1501.3 989.7 L1498.2 991.5 L1497.7 995.1 L1494.2 994.2 L1491.3 996.3 L1489.5 993.2 L1485.9 992.7 L1486.8 989.2 L1484.7 986.3 L1487.8 984.5 L1488.3 980.9 L1491.8 981.8 L1494.7 979.7 L1496.5 982.8 L1500.1 983.3 L1499.2 986.8Z" fill="#7a7a7a"/><circle cx="1493" cy="988" r="2.8" fill="#f0f0f0"/><circle cx="283.5" cy="946.5" r="4.6" fill="#222"/><path d="M281 946.5 H286 M283.5 944 V949" stroke="#fff" stroke-width="1.5"/><path d="M295.5 941 V952 M297.5 941 V952" stroke="#999" stroke-width="0.8"/><g>
<path d="M1418 156 L1458 142 L1485.5 165 L1441 177Z" fill="rgba(238,238,242,0.8)" stroke="#8a8a8a" stroke-width="0.8"/>
<path d="M1418 156 L1441 177 L1442 220 L1419 184Z" fill="rgba(232,232,236,0.75)" stroke="#9a9a9a" stroke-width="0.7"/>
<path d="M1441 177 L1485.5 165 L1482 200 L1442 220Z" fill="rgba(236,236,240,0.78)" stroke="#9a9a9a" stroke-width="0.7"/>
<text x="1444" y="163" font-family="Liberation Sans" font-size="8" font-weight="bold" fill="#6a6a6a" transform="rotate(-35 1444 163)">TOP</text>
<text x="1449" y="202" font-family="Liberation Sans" font-size="9" font-weight="bold" fill="#6a6a6a" transform="rotate(-27 1449 202)">FRONT</text>
<text x="1424" y="180" font-family="Liberation Sans" font-size="6.5" font-weight="bold" fill="#777" transform="rotate(58 1424 180)">TFEL</text>
<path d="M1442 220 L1441 178" stroke="#4f5cc4" stroke-width="1.5"/>
<text x="1436.5" y="173.5" font-family="Liberation Sans" font-size="10" font-weight="bold" fill="#6a72dc">Z</text>
<path d="M1442 220 L1489 199" stroke="#d04a55" stroke-width="1.5"/>
<text x="1488" y="203" font-family="Liberation Sans" font-size="10" fill="#e88080">X</text>
<path d="M1442 220 L1414 179" stroke="#6ccf74" stroke-width="1.6" opacity="0.8"/>
</g></svg>
</body></html>
